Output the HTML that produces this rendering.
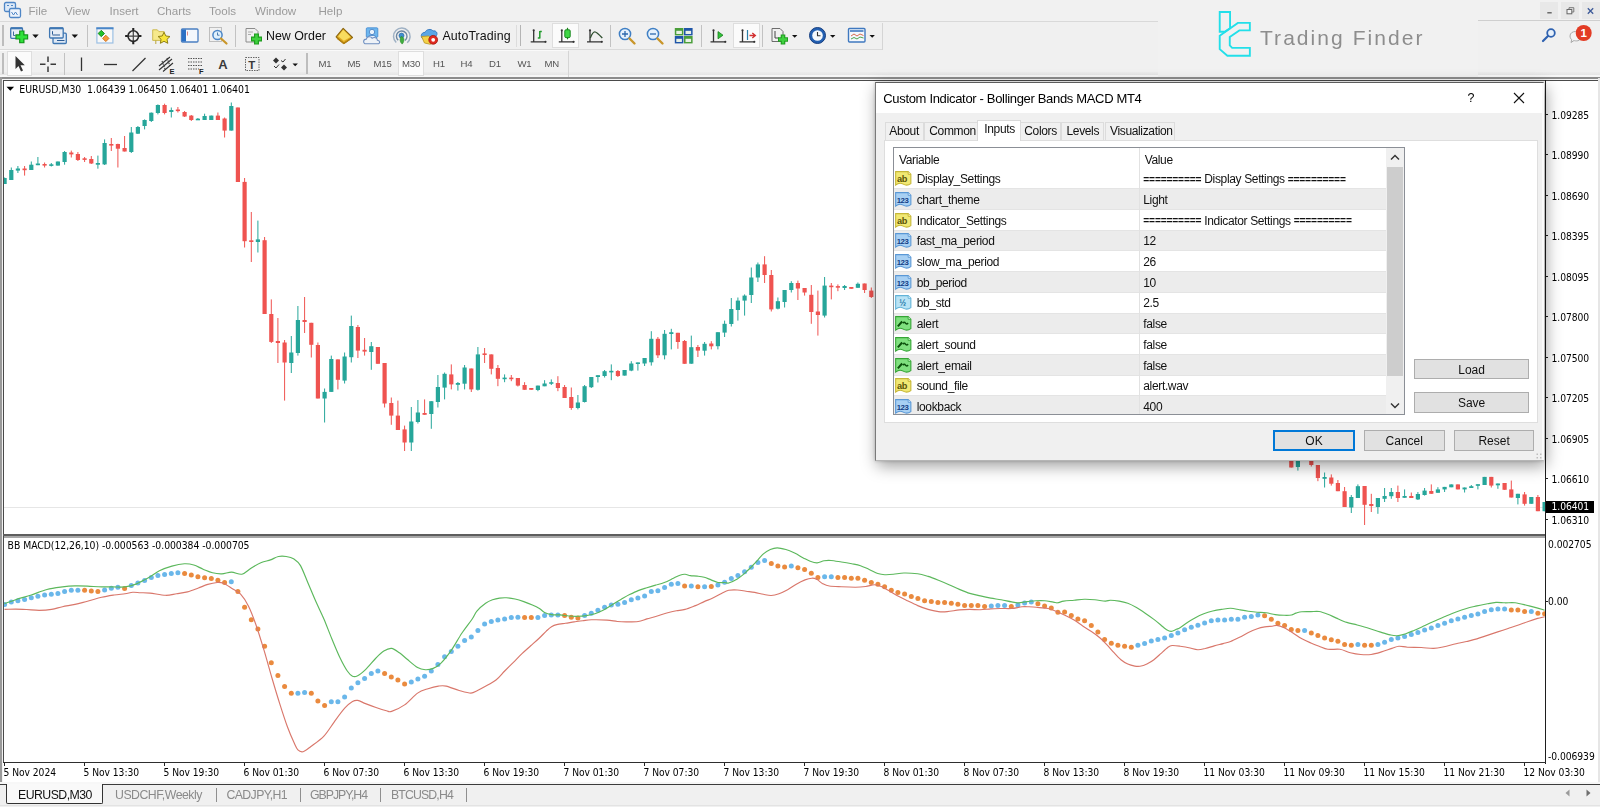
<!DOCTYPE html>
<html lang="en">
<head>
<meta charset="utf-8">
<title>EURUSD,M30 - Bollinger Bands MACD MT4</title>
<style>
html,body{margin:0;padding:0;}
body{width:1600px;height:807px;overflow:hidden;position:relative;background:#f0f0f0;font-family:"Liberation Sans",Arial,sans-serif;color:#000;}
.abs{position:absolute;}
.t{position:absolute;white-space:pre;line-height:1;filter:grayscale(1);}
.ui{font-family:"Liberation Sans",Arial,sans-serif;}
.ch{font-family:"DejaVu Sans","Liberation Sans",sans-serif;font-size:9.200px;color:#000;letter-spacing:-0.05px;transform:scaleY(1.1);transform-origin:50% 50%;}
#menubar{left:0;top:0;width:1600px;height:21px;background:#f1f1f1;}
#menubar .t{top:4.6px;font-size:11.6px;color:#9b9b9b;}
.hl{position:absolute;height:1px;}
.vl{position:absolute;width:1px;}
#chart{left:0;top:77px;width:1600px;height:708px;background:#fff;}
.tf{filter:grayscale(1);position:absolute;top:59.300px;font-size:9.6px;color:#555;white-space:pre;line-height:1;letter-spacing:-0.2px;}
.ax{position:absolute;left:1551.5px;}
.tk{position:absolute;left:1545px;width:3.2px;height:1px;background:#222;}
.tl{position:absolute;top:767.600px;}
.tt{position:absolute;top:763px;width:1px;height:3px;background:#222;}
/* dialog */
#dlg{left:875px;top:81.5px;width:669.3px;height:379.8px;background:#f0f0f0;box-sizing:border-box;border:1px solid #b5b5b5;border-left-color:#7a7a7a;border-top-color:#5c5c5c;border-right-color:#d5d5d5;box-shadow:2px 5px 15px rgba(0,0,0,.38),0 0 3px rgba(0,0,0,.2);}
#dlg .t{font-size:12px;letter-spacing:-0.35px;color:#111;}
.tab{position:absolute;top:40px;height:18px;box-sizing:border-box;border:1px solid #dcdcdc;border-bottom:none;background:#f0f0f0;}
.row{position:absolute;left:0;width:492px;height:20px;border-bottom:1px solid #e4e4e4;box-sizing:border-box;}
.row.alt{background:#ececec;}
.btn span{filter:grayscale(1);display:inline-block;}
.btn{position:absolute;box-sizing:border-box;border:1px solid #adadad;background:#e1e1e1;font-size:12px;text-align:center;line-height:19px;color:#111;height:21px;}
.ic{position:absolute;width:18.5px;height:17.4px;}
</style>
</head>
<body>
<div id="menubar" class="abs">
<svg class="abs" style="left:3px;top:1px" width="20" height="19" viewBox="0 0 20 19"><rect x="1.5" y="1.5" width="11" height="9" rx="1.5" fill="#dce9f7" stroke="#4f86c6" stroke-width="1.3"/><rect x="6.5" y="7.5" width="11" height="9" rx="1.5" fill="#eef4fb" stroke="#4f86c6" stroke-width="1.3"/><path d="M8.5 11l2 3 2-3 2 3" fill="none" stroke="#4f86c6" stroke-width="1"/><path d="M4 4.5h2M8 4.5h2" stroke="#4f86c6" stroke-width="1"/></svg>
<span class="t" style="left:28.5px">File</span>
<span class="t" style="left:65px">View</span>
<span class="t" style="left:109.5px">Insert</span>
<span class="t" style="left:157px">Charts</span>
<span class="t" style="left:209px">Tools</span>
<span class="t" style="left:255px">Window</span>
<span class="t" style="left:318.5px">Help</span>
</div>
<div class="hl" style="left:0;top:21px;width:1158px;background:#d9d9d9"></div>
<div class="hl" style="left:1478px;top:20px;width:122px;background:#cfcfcf"></div>

<div id="tb" class="abs" style="left:0;top:22px;width:1600px;height:55px;background:#f0f0f0"></div>
<div class="abs" style="left:0;top:72px;width:1600px;height:3px;background:linear-gradient(#ededed,#e5e5e5)"></div>
<div class="abs" style="left:0;top:75px;width:1600px;height:2px;background:#f6f6f6"></div>
<div class="hl" style="left:0;top:49px;width:883px;background:#dadada"></div>
<div class="hl" style="left:0;top:50px;width:568px;background:#fafafa"></div>
<div class="vl" style="left:882px;top:23px;height:27px;background:#d5d5d5"></div>
<div class="vl" style="left:568px;top:51px;height:26px;background:#d5d5d5"></div>
<!-- grippers -->
<div class="vl" style="left:2px;top:25px;height:21px;width:1.500px;background:#bdbdbd"></div>
<div class="vl" style="left:2px;top:53px;height:21px;width:1.500px;background:#bdbdbd"></div>
<div class="vl" style="left:519.600px;top:25px;height:21px;width:1.700px;background:#b4b4b4"></div>
<div class="vl" style="left:306px;top:53px;height:21px;width:1.500px;background:#bdbdbd"></div>
<!-- separators tb1 -->
<div class="vl" style="left:87px;top:25px;height:22px;width:1.300px;background:#c2c2c2"></div>
<div class="vl" style="left:235px;top:25px;height:22px;width:1.300px;background:#c2c2c2"></div>
<div class="vl" style="left:515.800px;top:25px;height:22px;width:1.200px;background:#dcdcdc"></div>
<div class="vl" style="left:610px;top:25px;height:22px;width:1.300px;background:#c2c2c2"></div>
<div class="vl" style="left:701px;top:25px;height:22px;width:1.300px;background:#c2c2c2"></div>
<div class="vl" style="left:762px;top:25px;height:22px;width:1.300px;background:#c2c2c2"></div>
<div class="vl" style="left:64px;top:53px;height:22px;width:1.300px;background:#c2c2c2"></div>
<!-- pressed boxes -->
<div class="abs" style="left:552px;top:23px;width:27px;height:25px;background:#fbfbfb;border:1px solid #dedede;box-sizing:border-box"></div>
<div class="abs" style="left:733px;top:23px;width:27px;height:25px;background:#fbfbfb;border:1px solid #dedede;box-sizing:border-box"></div>
<div class="abs" style="left:7px;top:51px;width:25px;height:25px;background:#fbfbfb;border:1px solid #dedede;box-sizing:border-box"></div>
<div class="abs" style="left:398px;top:51px;width:26px;height:25px;background:#fbfbfb;border:1px solid #dedede;box-sizing:border-box"></div>
<svg class="abs" style="left:0;top:22px" width="900" height="56" viewBox="0 22 900 56">
<!-- 1 new chart -->
<g><rect x="10.700" y="27.800" width="11.800" height="10.500" rx="1" fill="#e8eef6" stroke="#3f77b3" stroke-width="1.300"/><path d="M10.700 28.300h11.800" stroke="#3f77b3" stroke-width="2"/><path d="M13.500 31.500v4M13.500 35.500h2" stroke="#2c5c96" stroke-width=".9" fill="none"/><path d="M21.800 30.500v12.800M15.400 36.900h12.800" stroke="#13921a" stroke-width="5.400"/><path d="M21.800 31.600v10.600M16.500 36.900h10.600" stroke="#2fe23a" stroke-width="3"/><path d="M32.300 34.400h6.400l-3.200 3.500z" fill="#111"/></g>
<!-- 2 profiles -->
<g><rect x="53" y="33.200" width="13.300" height="10.300" rx="1" fill="#dfe9f5" stroke="#3f77b3" stroke-width="1.300"/><path d="M57 40.500h7.500" stroke="#2c5c96" stroke-width="1"/><rect x="49.600" y="27.800" width="13.600" height="10.200" rx="1" fill="#e8eef6" stroke="#3f77b3" stroke-width="1.300"/><path d="M49.600 28.300h13.600" stroke="#3f77b3" stroke-width="2"/><path d="M52.500 31.200v3.300M52.500 35h7.500" stroke="#2c5c96" stroke-width="1" fill="none"/><path d="M71.600 34.400h6.400l-3.200 3.500z" fill="#111"/></g>
<!-- 3 market watch -->
<g><rect x="96.900" y="28" width="16" height="15" fill="#f8f8f8" stroke="#9cc0e4" stroke-width="1.200"/><path d="M96.300 28.300h17.200" stroke="#4a86c8" stroke-width="2"/><path d="M101.300 30.300l3.200 3.200-3.200 3.200-3.200-3.200z" fill="#22c22a" stroke="#0f7a16" stroke-width=".8"/><path d="M105.800 35.200l3.200 3.200-3.200 3.200-3.200-3.200z" fill="#f59a3a" stroke="#c9640e" stroke-width=".8"/></g>
<!-- 4 crosshair -->
<g fill="none"><path d="M133.300 28.300v15.600M125.500 36.100h15.600" stroke="#444" stroke-width="1.200"/><circle cx="133.300" cy="36.100" r="5.300" stroke="#2a2a2a" stroke-width="1.600"/><path d="M133.300 28v2.500M133.300 41.700v2.500M125.200 36.100h2.500M138.900 36.100h2.500" stroke="#222" stroke-width="2"/></g>
<!-- 5 folder star -->
<g><path d="M152.700 29.800h4.600l1.600 1.800h5.300v8.800h-11.500z" fill="#f6e98b" stroke="#c9b646" stroke-width=".9"/><path d="M155.800 40.400v3.600" stroke="#b9a63c" stroke-width="1"/><path d="M164 32.300l1.900 3.700 4.100.5-3 2.800.8 4-3.800-2-3.700 2 .8-4-3-2.800 4.100-.5z" fill="#f8e53a" stroke="#8f7f14" stroke-width="1"/></g>
<!-- 6 navigator -->
<g><rect x="181.5" y="29" width="16.5" height="13" rx="1" fill="#f3f7fc" stroke="#4a7fc1" stroke-width="1.3"/><rect x="182" y="29.5" width="4" height="12" fill="#2a6fc4"/><path d="M187.5 31.5v4" stroke="#d46a6a" stroke-width=".8"/></g>
<!-- 7 magnifier clock -->
<g><rect x="209.5" y="27.5" width="12" height="14" fill="#f1f1f1" stroke="#b9b9b9" stroke-width=".9"/><circle cx="217.5" cy="35" r="4.6" fill="#dff0fc" stroke="#4a86c8" stroke-width="1.5"/><path d="M217.5 32.5v2.7h2" stroke="#3a6ea5" stroke-width=".9" fill="none"/><path d="M221 38.5l5.5 5" stroke="#c9962a" stroke-width="2.2" stroke-linecap="round"/></g>
<!-- 8 new order -->
<g><path d="M246 28.5h9l3 3v10.5h-12z" fill="#f0f0f0" stroke="#8c8c8c" stroke-width="1"/><path d="M248 32h5M248 34.5h3" stroke="#9a9a9a" stroke-width=".8"/><path d="M256.5 33.5v11M251 39h11" stroke="#1f9c1f" stroke-width="5"/><path d="M256.5 34.5v9M252 39h9" stroke="#3fd13f" stroke-width="2.6"/></g>
<!-- 9 gold book -->
<g><path d="M343.200 28.300l9.300 9.200-8.700 6-7.700-6.600z" fill="#e2ac22" stroke="#8a6510" stroke-width="1.100" stroke-linejoin="round"/><path d="M343.200 29.800l7.300 7.200-6.700 3.800-5.600-4.600z" fill="#f8dc5e"/><path d="M337 38.300l6.800 5.200 8-5.500" fill="none" stroke="#b5820f" stroke-width="1.300"/></g>
<!-- 10 person cloud -->
<g><rect x="366.300" y="27.800" width="11.500" height="9.500" rx="1" fill="#6db6ee" stroke="#3d86d0" stroke-width=".8"/><circle cx="372" cy="32" r="2.700" fill="#eaf3fc" stroke="#4d83c4" stroke-width=".9"/><path d="M367.500 38c0-3.500 9-3.500 9 0" fill="#eaf3fc" stroke="#4d83c4" stroke-width=".9"/><path d="M366 43.800c-3.200 0-3.200-4.600.3-4.700.6-2.600 4.400-3.200 5.800-.9 2.200-1.600 5.400-.3 5.300 2 3 .2 2.900 3.700.2 3.600z" fill="#eef2f7" stroke="#6f8fc0" stroke-width="1.100"/></g>
<!-- 11 signal -->
<g fill="none"><path d="M396.200 42.500a8.300 8.300 0 1 1 11 .2" stroke="#9fb1c4" stroke-width="1.500"/><path d="M398.200 40.300a5.300 5.300 0 1 1 6.800 .2" stroke="#6d87a2" stroke-width="1.400"/><circle cx="401.500" cy="35.600" r="2.500" fill="#3f8fd0" stroke="#2b6ca8" stroke-width=".7"/><path d="M401 36.500c3.500.5 3.800 4.500 1.200 7.600-2.200-1.800-2.800-4.300-1.200-7.600z" fill="#3fae3f" stroke="#2a8a2a" stroke-width=".6"/></g>
<!-- 12 autotrading -->
<g><path d="M422 38c-2-3 .5-6 3-5.500 1-3.500 6.500-4 8-1.500 3-.8 5 2 3.500 4.500l-3 4.500h-9z" fill="#5aa6e6" stroke="#2f74bd" stroke-width=".9"/><path d="M421.500 36.500l3 6.500 6 1.300 3-4.500-5-3.800z" fill="#f3d248" stroke="#b8901c" stroke-width=".8"/><circle cx="433.200" cy="39.800" r="4.400" fill="#e02a20" stroke="#a3150d" stroke-width=".8"/><circle cx="433.200" cy="39.800" r="1.900" fill="#fff"/></g>
<!-- 13 bar chart -->
<g><path d="M533.7 30.500v11.800M530.7 41.800h14.500" stroke="#333" stroke-width="1.300" fill="none"/><circle cx="533.7" cy="30.300" r="1.100" fill="#333"/><circle cx="545.5" cy="41.800" r="1.100" fill="#333"/><path d="M539.800 31v7.500M537.800 38h2M539.800 31.500h2" stroke="#1f9a2a" stroke-width="1.500" fill="none"/></g>
<!-- 14 candle -->
<g><path d="M561.8 30.500v11.800M558.8 41.800h14.500" stroke="#333" stroke-width="1.300" fill="none"/><circle cx="561.8" cy="30.300" r="1.100" fill="#333"/><circle cx="573.5999999999999" cy="41.800" r="1.100" fill="#333"/><path d="M567.500 27.800v11.500" stroke="#1c7d1c" stroke-width="1.200"/><rect x="564.800" y="29.800" width="5.400" height="7.800" rx="1.200" fill="#3fd745" stroke="#1c8a22" stroke-width="1"/></g>
<!-- 15 line chart -->
<g><path d="M590 30.500v11.800M587 41.800h14.500" stroke="#333" stroke-width="1.300" fill="none"/><circle cx="590" cy="30.300" r="1.100" fill="#333"/><circle cx="601.8" cy="41.800" r="1.100" fill="#333"/><path d="M590.300 38c1.500-4 3-6.200 4.500-6.200s4.500 3 7.500 6.200" stroke="#2f4f2f" stroke-width="1.300" fill="none"/></g>
<!-- 16 zoom in -->
<g><circle cx="625" cy="34" r="5.600" fill="#e6f2fc" stroke="#3f7fc4" stroke-width="1.500"/><path d="M622 34h6M625 31v6" stroke="#2c68ad" stroke-width="1.300"/><path d="M629.500 38.500l5 5" stroke="#c9962a" stroke-width="2.400" stroke-linecap="round"/></g>
<!-- 17 zoom out -->
<g><circle cx="653" cy="34" r="5.600" fill="#e6f2fc" stroke="#3f7fc4" stroke-width="1.500"/><path d="M650 34h6" stroke="#2c68ad" stroke-width="1.300"/><path d="M657.500 38.500l5 5" stroke="#c9962a" stroke-width="2.400" stroke-linecap="round"/></g>
<!-- 18 grid -->
<g><rect x="674.800" y="28" width="8.600" height="7.400" fill="#4a9e3a"/><rect x="684" y="28" width="8.600" height="7.400" fill="#1f55a8"/><rect x="674.800" y="36" width="8.600" height="7.400" fill="#1f55a8"/><rect x="684" y="36" width="8.600" height="7.400" fill="#4a9e3a"/><g fill="#e9f1e4"><rect x="676.300" y="30.800" width="5.600" height="3.200"/><rect x="685.500" y="30.800" width="5.600" height="3.200"/><rect x="676.300" y="38.800" width="5.600" height="3.200"/><rect x="685.500" y="38.800" width="5.600" height="3.200"/></g></g>
<!-- 19 chart shift -->
<g><path d="M713.5 30.500v11.800M710.5 41.800h14.500" stroke="#333" stroke-width="1.300" fill="none"/><circle cx="713.5" cy="30.300" r="1.100" fill="#333"/><circle cx="725.3" cy="41.800" r="1.100" fill="#333"/><path d="M718 31.600l5 3.600-5 3.600z" fill="#2fc23a" stroke="#1c7d1c" stroke-width=".8"/></g>
<!-- 20 autoscroll -->
<g><path d="M742.5 30.500v11.800M739.5 41.800h14.500" stroke="#333" stroke-width="1.300" fill="none"/><circle cx="742.5" cy="30.300" r="1.100" fill="#333"/><circle cx="754.3" cy="41.800" r="1.100" fill="#333"/><path d="M747.500 30v10" stroke="#2a7fa8" stroke-width="1.200"/><path d="M749.500 35.500h5.500M752.300 33l3 2.500-3 2.500" stroke="#d22f2f" stroke-width="1.400" fill="none"/></g>
<!-- 21 indicators -->
<g><path d="M772 28.500h8l3 3v10h-11z" fill="#f0f0f0" stroke="#6d6d6d" stroke-width="1"/><path d="M775 31v7h4" stroke="#444" stroke-width="1" fill="none"/><path d="M783 34.500v10M778 39.500h10" stroke="#1f9c1f" stroke-width="4.600"/><path d="M783 35.500v8M779 39.500h8" stroke="#3fd13f" stroke-width="2.400"/><path d="M792 35h5.400l-2.700 2.800z" fill="#111"/></g>
<!-- 22 clock -->
<g><circle cx="817.500" cy="35.500" r="8" fill="#2360b2" stroke="#173f80" stroke-width="1"/><circle cx="817.500" cy="35.500" r="5.300" fill="#f4f8fc"/><path d="M817.500 32v3.800h3" stroke="#333" stroke-width="1.100" fill="none"/><path d="M830 35h5.400l-2.700 2.800z" fill="#111"/></g>
<!-- 23 template -->
<g><rect x="848.500" y="28.500" width="16.500" height="13.500" rx="1" fill="#f4f8fd" stroke="#3f78bf" stroke-width="1.400"/><path d="M850 31h13.500" stroke="#3f78bf" stroke-width="1.600"/><path d="M851 36l3-2 3 2 3-2 3.500 1.500" stroke="#d45a3a" stroke-width=".9" fill="none"/><path d="M851 39l3-1.500 3 1.500 3-2 3.500 1" stroke="#3a9a3a" stroke-width=".9" fill="none"/><path d="M869.500 35h5.400l-2.700 2.800z" fill="#111"/></g>
<!-- toolbar 2 -->
<path d="M15.500 56v13l3-3 2.500 5.500 2-1-2.500-5.300h4.300z" fill="#333"/>
<path d="M48 56.500v5.500M48 66.500v5.500M40 64.250h5.500M50.500 64.250h5.500" stroke="#3a3a3a" stroke-width="1.500" fill="none"/>
<path d="M81.500 57.500v13.500" stroke="#333" stroke-width="1.300"/>
<path d="M104 64.500h13" stroke="#333" stroke-width="1.300"/>
<path d="M132.500 71l13-13" stroke="#333" stroke-width="1.300"/>
<g stroke="#333" stroke-width="1.100" fill="none"><path d="M159 66l11-9M159 70l13-11M163 71.500l10-8.500" /><path d="M162 61l3 8M167 58l3 8" stroke-dasharray="1.500 1"/></g>
<text x="169.500" y="73.800" font-size="7.500" font-weight="bold" font-family="Liberation Sans,sans-serif" fill="#222">E</text>
<g stroke="#555" stroke-width="1" stroke-dasharray="1.500 1"><path d="M188 58.500h15M188 62h15M188 65.500h15M188 69h11"/></g>
<text x="199" y="74" font-size="7.500" font-weight="bold" font-family="Liberation Sans,sans-serif" fill="#222">F</text>
<text x="218.300" y="69" font-size="13" font-weight="bold" font-family="Liberation Sans,sans-serif" fill="#3a3a3a">A</text>
<g><rect x="245.500" y="57.500" width="13.500" height="13" fill="none" stroke="#666" stroke-width="1" stroke-dasharray="1.500 1"/><text x="248.300" y="68.800" font-size="11.500" font-weight="bold" font-family="Liberation Sans,sans-serif" fill="#3a3a3a">T</text></g>
<g fill="#333"><path d="M276 57.500l3 3-3 3-3-3z"/><path d="M284 64.500l3 3-3 3-3-3z"/><path d="M274 66l2 2 3-3.500" stroke="#333" stroke-width="1" fill="none"/><path d="M281 60.500l2 1.500 2.500-3" stroke="#333" stroke-width="1" fill="none"/><path d="M292.500 63.500h5.400l-2.700 2.800z" fill="#111"/></g>
</svg>
<span class="t ui" style="left:266px;top:29.900px;font-size:12.400px;color:#111">New Order</span>
<span class="t ui" style="left:442.500px;top:29.900px;font-size:12.400px;color:#111;letter-spacing:.1px">AutoTrading</span>
<span class="tf" style="left:318.500px">M1</span>
<span class="tf" style="left:347.500px">M5</span>
<span class="tf" style="left:373.500px">M15</span>
<span class="tf" style="left:402px">M30</span>
<span class="tf" style="left:433px">H1</span>
<span class="tf" style="left:460.500px">H4</span>
<span class="tf" style="left:489px">D1</span>
<span class="tf" style="left:517.500px">W1</span>
<span class="tf" style="left:544.500px">MN</span>
<!-- logo area -->
<div class="abs" style="left:1158px;top:0;width:320px;height:77px;background:#f1f1f1"></div>
<svg class="abs" style="left:1200px;top:0" width="240" height="70" viewBox="0 0 1600 467"><g fill="none" stroke="#22dfe9" stroke-width="12.500" stroke-linejoin="miter"><path d="M131 80H200V188L164 212H131Z"/><path d="M131 238L252 153H332V203H262L198 247V303L214 319H332V372H182L131 328Z"/></g></svg>
<span class="t ui" style="left:1260px;top:26.800px;font-size:21px;color:#8d8d8d;letter-spacing:2.050px">Trading Finder</span>
<!-- window controls -->
<div class="abs" style="left:1540px;top:2px;width:18px;height:17px;background:#e8e8e8"></div>
<div class="abs" style="left:1561px;top:2px;width:18px;height:17px;background:#e8e8e8"></div>
<div class="abs" style="left:1582px;top:2px;width:18px;height:17px;background:#e8e8e8"></div>
<svg class="abs" style="left:1540px;top:2px" width="60" height="17" viewBox="0 0 60 17"><path d="M7.300 10.800h4.400" stroke="#555" stroke-width="1.300"/><rect x="27" y="7.500" width="4.800" height="4.300" fill="#f4f4f4" stroke="#666" stroke-width="1"/><path d="M29 7.500v-1.800h4.800v4.300h-2" fill="none" stroke="#777" stroke-width="1"/><path d="M47.800 6.300l5.400 5.400M53.200 6.300l-5.400 5.400" stroke="#3d5a99" stroke-width="1.300"/></svg>
<!-- search + chat -->
<svg class="abs" style="left:1535px;top:22px" width="65" height="28" viewBox="0 0 65 28"><circle cx="16" cy="11" r="3.800" fill="#e8f1fb" stroke="#2f62b0" stroke-width="1.800"/><path d="M13 14l-5 5" stroke="#2f62b0" stroke-width="2.200" stroke-linecap="round"/><path d="M35 14c0-6 11-6 11 0s-6 5-7 4.500l-3 2 .8-2.800c-1-.7-1.800-2-1.800-3.700z" fill="#f4f4f4" stroke="#a9a9a9" stroke-width="1"/><circle cx="48.700" cy="11" r="8" fill="#e23b24"/><text x="48.700" y="15.200" text-anchor="middle" font-size="11.500" font-weight="bold" font-family="Liberation Sans,sans-serif" fill="#fff">1</text></svg>

<div class="abs" style="left:0;top:77px;width:1600px;height:705px;background:#fff"></div>
<div class="abs" style="left:4px;top:506.700px;width:1541px;height:1px;background:#e6e6e6"></div>
<svg class="abs" style="left:0;top:0" width="1546" height="807" viewBox="0 0 1546 807">
<g shape-rendering="auto">
<path d="M4.6 177.5V184.0" stroke="#26a69a" stroke-width="1"/>
<rect x="2.5" y="178.0" width="4.2" height="6.0" fill="#26a69a"/>
<path d="M11.3 167.5V180.0" stroke="#26a69a" stroke-width="1"/>
<rect x="9.2" y="170.0" width="4.2" height="10.0" fill="#26a69a"/>
<path d="M17.9 166.0V173.0" stroke="#26a69a" stroke-width="1"/>
<rect x="15.8" y="168.5" width="4.2" height="2.1" fill="#26a69a"/>
<path d="M24.6 166.0V175.6" stroke="#ef5350" stroke-width="1"/>
<rect x="22.5" y="168.5" width="4.2" height="1.7" fill="#ef5350"/>
<path d="M31.3 161.5V170.0" stroke="#26a69a" stroke-width="1"/>
<rect x="29.2" y="164.7" width="4.2" height="5.3" fill="#26a69a"/>
<path d="M37.9 157.0V165.2" stroke="#26a69a" stroke-width="1"/>
<rect x="35.8" y="163.5" width="4.2" height="1.7" fill="#26a69a"/>
<path d="M44.6 162.5V167.5" stroke="#ef5350" stroke-width="1"/>
<rect x="42.5" y="164.0" width="4.2" height="1.6" fill="#ef5350"/>
<path d="M51.3 163.0V166.5" stroke="#26a69a" stroke-width="1"/>
<rect x="49.2" y="164.3" width="4.2" height="1.6" fill="#26a69a"/>
<path d="M57.9 161.5V165.6" stroke="#26a69a" stroke-width="1"/>
<rect x="55.8" y="161.5" width="4.2" height="4.1" fill="#26a69a"/>
<path d="M64.6 151.0V164.7" stroke="#26a69a" stroke-width="1"/>
<rect x="62.5" y="152.0" width="4.2" height="10.0" fill="#26a69a"/>
<path d="M71.3 150.6V157.5" stroke="#ef5350" stroke-width="1"/>
<rect x="69.2" y="152.5" width="4.2" height="1.9" fill="#ef5350"/>
<path d="M77.9 152.0V161.0" stroke="#ef5350" stroke-width="1"/>
<rect x="75.8" y="154.0" width="4.2" height="6.0" fill="#ef5350"/>
<path d="M84.6 157.0V162.0" stroke="#ef5350" stroke-width="1"/>
<rect x="82.5" y="158.3" width="4.2" height="1.6" fill="#ef5350"/>
<path d="M91.3 156.0V164.0" stroke="#ef5350" stroke-width="1"/>
<rect x="89.2" y="159.0" width="4.2" height="4.5" fill="#ef5350"/>
<path d="M97.9 155.6V168.7" stroke="#26a69a" stroke-width="1"/>
<rect x="95.8" y="163.0" width="4.2" height="1.7" fill="#26a69a"/>
<path d="M104.6 139.4V165.0" stroke="#26a69a" stroke-width="1"/>
<rect x="102.5" y="143.0" width="4.2" height="21.4" fill="#26a69a"/>
<path d="M111.3 138.0V151.0" stroke="#ef5350" stroke-width="1"/>
<rect x="109.2" y="144.0" width="4.2" height="1.6" fill="#ef5350"/>
<path d="M117.9 143.7V167.5" stroke="#ef5350" stroke-width="1"/>
<rect x="115.8" y="144.0" width="4.2" height="4.7" fill="#ef5350"/>
<path d="M124.6 136.0V151.5" stroke="#ef5350" stroke-width="1"/>
<rect x="122.5" y="148.0" width="4.2" height="3.5" fill="#ef5350"/>
<path d="M131.3 127.0V153.0" stroke="#26a69a" stroke-width="1"/>
<rect x="129.2" y="132.5" width="4.2" height="19.5" fill="#26a69a"/>
<path d="M137.9 126.0V134.0" stroke="#26a69a" stroke-width="1"/>
<rect x="135.8" y="127.0" width="4.2" height="6.7" fill="#26a69a"/>
<path d="M144.6 119.4V129.4" stroke="#26a69a" stroke-width="1"/>
<rect x="142.5" y="120.0" width="4.2" height="6.0" fill="#26a69a"/>
<path d="M151.3 112.5V122.0" stroke="#26a69a" stroke-width="1"/>
<rect x="149.2" y="112.7" width="4.2" height="8.3" fill="#26a69a"/>
<path d="M157.9 104.4V114.4" stroke="#26a69a" stroke-width="1"/>
<rect x="155.8" y="105.0" width="4.2" height="8.0" fill="#26a69a"/>
<path d="M164.6 103.7V114.4" stroke="#ef5350" stroke-width="1"/>
<rect x="162.5" y="105.0" width="4.2" height="8.0" fill="#ef5350"/>
<path d="M171.3 107.5V117.5" stroke="#26a69a" stroke-width="1"/>
<rect x="169.2" y="110.0" width="4.2" height="2.0" fill="#26a69a"/>
<path d="M177.9 107.0V112.5" stroke="#ef5350" stroke-width="1"/>
<rect x="175.8" y="109.5" width="4.2" height="1.6" fill="#ef5350"/>
<path d="M184.6 111.0V117.0" stroke="#ef5350" stroke-width="1"/>
<rect x="182.5" y="112.0" width="4.2" height="4.5" fill="#ef5350"/>
<path d="M191.3 115.0V121.0" stroke="#ef5350" stroke-width="1"/>
<rect x="189.2" y="115.6" width="4.2" height="4.4" fill="#ef5350"/>
<path d="M197.9 118.0V120.0" stroke="#26a69a" stroke-width="1"/>
<rect x="195.8" y="118.7" width="4.2" height="1.6" fill="#26a69a"/>
<path d="M204.6 113.7V120.0" stroke="#26a69a" stroke-width="1"/>
<rect x="202.5" y="116.0" width="4.2" height="4.0" fill="#26a69a"/>
<path d="M211.3 115.6V120.0" stroke="#26a69a" stroke-width="1"/>
<rect x="209.2" y="115.6" width="4.2" height="4.4" fill="#26a69a"/>
<path d="M217.9 112.5V120.0" stroke="#ef5350" stroke-width="1"/>
<rect x="215.8" y="115.6" width="4.2" height="4.4" fill="#ef5350"/>
<path d="M224.6 117.5V137.5" stroke="#ef5350" stroke-width="1"/>
<rect x="222.5" y="118.5" width="4.2" height="12.1" fill="#ef5350"/>
<path d="M231.3 102.5V130.6" stroke="#26a69a" stroke-width="1"/>
<rect x="229.2" y="106.0" width="4.2" height="24.6" fill="#26a69a"/>
<path d="M237.9 107.5V182.0" stroke="#ef5350" stroke-width="1"/>
<rect x="235.8" y="107.5" width="4.2" height="74.5" fill="#ef5350"/>
<path d="M244.6 178.0V247.5" stroke="#ef5350" stroke-width="1"/>
<rect x="242.5" y="181.9" width="4.2" height="59.3" fill="#ef5350"/>
<path d="M251.3 212.0V262.0" stroke="#ef5350" stroke-width="1"/>
<rect x="249.2" y="240.3" width="4.2" height="1.7" fill="#ef5350"/>
<path d="M257.9 220.6V252.5" stroke="#26a69a" stroke-width="1"/>
<rect x="255.8" y="239.4" width="4.2" height="2.6" fill="#26a69a"/>
<path d="M264.6 237.0V314.0" stroke="#ef5350" stroke-width="1"/>
<rect x="262.5" y="240.2" width="4.2" height="73.8" fill="#ef5350"/>
<path d="M271.3 299.4V343.0" stroke="#ef5350" stroke-width="1"/>
<rect x="269.2" y="314.0" width="4.2" height="27.9" fill="#ef5350"/>
<path d="M277.9 318.0V363.0" stroke="#ef5350" stroke-width="1"/>
<rect x="275.8" y="341.0" width="4.2" height="2.0" fill="#ef5350"/>
<path d="M284.6 340.0V400.6" stroke="#ef5350" stroke-width="1"/>
<rect x="282.5" y="342.5" width="4.2" height="20.0" fill="#ef5350"/>
<path d="M291.3 336.0V373.0" stroke="#26a69a" stroke-width="1"/>
<rect x="289.2" y="352.5" width="4.2" height="10.5" fill="#26a69a"/>
<path d="M297.9 306.0V355.6" stroke="#26a69a" stroke-width="1"/>
<rect x="295.8" y="320.0" width="4.2" height="33.0" fill="#26a69a"/>
<path d="M304.6 297.0V333.0" stroke="#ef5350" stroke-width="1"/>
<rect x="302.5" y="320.0" width="4.2" height="2.0" fill="#ef5350"/>
<path d="M311.3 322.8V357.5" stroke="#ef5350" stroke-width="1"/>
<rect x="309.2" y="322.8" width="4.2" height="22.0" fill="#ef5350"/>
<path d="M317.9 342.5V398.5" stroke="#ef5350" stroke-width="1"/>
<rect x="315.8" y="345.0" width="4.2" height="53.5" fill="#ef5350"/>
<path d="M324.6 388.5V422.5" stroke="#26a69a" stroke-width="1"/>
<rect x="322.5" y="391.9" width="4.2" height="6.6" fill="#26a69a"/>
<path d="M331.3 355.6V391.9" stroke="#26a69a" stroke-width="1"/>
<rect x="329.2" y="359.0" width="4.2" height="32.9" fill="#26a69a"/>
<path d="M337.9 359.4V389.4" stroke="#ef5350" stroke-width="1"/>
<rect x="335.8" y="359.4" width="4.2" height="20.4" fill="#ef5350"/>
<path d="M344.6 352.5V383.5" stroke="#26a69a" stroke-width="1"/>
<rect x="342.5" y="356.5" width="4.2" height="24.1" fill="#26a69a"/>
<path d="M351.3 315.6V362.5" stroke="#26a69a" stroke-width="1"/>
<rect x="349.2" y="326.0" width="4.2" height="31.2" fill="#26a69a"/>
<path d="M357.9 325.0V358.0" stroke="#ef5350" stroke-width="1"/>
<rect x="355.8" y="327.0" width="4.2" height="23.6" fill="#ef5350"/>
<path d="M364.6 338.0V355.6" stroke="#ef5350" stroke-width="1"/>
<rect x="362.5" y="349.8" width="4.2" height="1.8" fill="#ef5350"/>
<path d="M371.3 342.0V369.8" stroke="#26a69a" stroke-width="1"/>
<rect x="369.2" y="346.2" width="4.2" height="5.8" fill="#26a69a"/>
<path d="M377.9 347.0V363.8" stroke="#ef5350" stroke-width="1"/>
<rect x="375.8" y="347.0" width="4.2" height="16.8" fill="#ef5350"/>
<path d="M384.6 363.0V407.5" stroke="#ef5350" stroke-width="1"/>
<rect x="382.5" y="363.0" width="4.2" height="40.5" fill="#ef5350"/>
<path d="M391.3 397.5V424.8" stroke="#ef5350" stroke-width="1"/>
<rect x="389.2" y="403.0" width="4.2" height="12.6" fill="#ef5350"/>
<path d="M397.9 400.6V430.0" stroke="#ef5350" stroke-width="1"/>
<rect x="395.8" y="415.6" width="4.2" height="14.4" fill="#ef5350"/>
<path d="M404.6 425.6V451.0" stroke="#ef5350" stroke-width="1"/>
<rect x="402.5" y="429.4" width="4.2" height="13.1" fill="#ef5350"/>
<path d="M411.3 407.0V451.0" stroke="#26a69a" stroke-width="1"/>
<rect x="409.2" y="421.5" width="4.2" height="21.0" fill="#26a69a"/>
<path d="M417.9 400.0V423.5" stroke="#26a69a" stroke-width="1"/>
<rect x="415.8" y="412.5" width="4.2" height="9.5" fill="#26a69a"/>
<path d="M424.6 399.4V414.8" stroke="#ef5350" stroke-width="1"/>
<rect x="422.5" y="413.0" width="4.2" height="1.8" fill="#ef5350"/>
<path d="M431.3 401.2V428.8" stroke="#26a69a" stroke-width="1"/>
<rect x="429.2" y="401.2" width="4.2" height="12.8" fill="#26a69a"/>
<path d="M437.9 375.0V407.5" stroke="#26a69a" stroke-width="1"/>
<rect x="435.8" y="387.0" width="4.2" height="15.0" fill="#26a69a"/>
<path d="M444.6 372.5V399.4" stroke="#26a69a" stroke-width="1"/>
<rect x="442.5" y="373.8" width="4.2" height="13.8" fill="#26a69a"/>
<path d="M451.3 364.4V389.4" stroke="#ef5350" stroke-width="1"/>
<rect x="449.2" y="374.4" width="4.2" height="10.0" fill="#ef5350"/>
<path d="M457.9 382.0V390.6" stroke="#26a69a" stroke-width="1"/>
<rect x="455.8" y="383.0" width="4.2" height="1.8" fill="#26a69a"/>
<path d="M464.6 365.0V389.4" stroke="#26a69a" stroke-width="1"/>
<rect x="462.5" y="367.5" width="4.2" height="16.2" fill="#26a69a"/>
<path d="M471.3 368.5V392.0" stroke="#ef5350" stroke-width="1"/>
<rect x="469.2" y="368.5" width="4.2" height="20.9" fill="#ef5350"/>
<path d="M477.9 347.0V390.6" stroke="#26a69a" stroke-width="1"/>
<rect x="475.8" y="354.4" width="4.2" height="35.4" fill="#26a69a"/>
<path d="M484.6 348.0V363.0" stroke="#ef5350" stroke-width="1"/>
<rect x="482.5" y="353.4" width="4.2" height="1.6" fill="#ef5350"/>
<path d="M491.3 354.4V374.4" stroke="#ef5350" stroke-width="1"/>
<rect x="489.2" y="354.4" width="4.2" height="14.4" fill="#ef5350"/>
<path d="M497.9 365.0V386.2" stroke="#ef5350" stroke-width="1"/>
<rect x="495.8" y="368.0" width="4.2" height="10.8" fill="#ef5350"/>
<path d="M504.6 374.4V382.2" stroke="#26a69a" stroke-width="1"/>
<rect x="502.5" y="377.6" width="4.2" height="1.6" fill="#26a69a"/>
<path d="M511.3 375.0V381.2" stroke="#ef5350" stroke-width="1"/>
<rect x="509.2" y="377.6" width="4.2" height="1.6" fill="#ef5350"/>
<path d="M517.9 378.0V386.5" stroke="#ef5350" stroke-width="1"/>
<rect x="515.8" y="378.0" width="4.2" height="7.6" fill="#ef5350"/>
<path d="M524.6 382.2V389.8" stroke="#ef5350" stroke-width="1"/>
<rect x="522.5" y="385.0" width="4.2" height="4.8" fill="#ef5350"/>
<path d="M531.3 388.0V389.8" stroke="#ef5350" stroke-width="1"/>
<rect x="529.2" y="388.0" width="4.2" height="1.8" fill="#ef5350"/>
<path d="M537.9 385.6V391.2" stroke="#26a69a" stroke-width="1"/>
<rect x="535.8" y="385.6" width="4.2" height="4.4" fill="#26a69a"/>
<path d="M544.6 380.2V386.2" stroke="#26a69a" stroke-width="1"/>
<rect x="542.5" y="383.5" width="4.2" height="2.8" fill="#26a69a"/>
<path d="M551.3 379.4V385.0" stroke="#26a69a" stroke-width="1"/>
<rect x="549.2" y="382.2" width="4.2" height="1.6" fill="#26a69a"/>
<path d="M557.9 376.2V391.2" stroke="#ef5350" stroke-width="1"/>
<rect x="555.8" y="383.0" width="4.2" height="5.0" fill="#ef5350"/>
<path d="M564.6 385.0V398.0" stroke="#ef5350" stroke-width="1"/>
<rect x="562.5" y="387.0" width="4.2" height="11.0" fill="#ef5350"/>
<path d="M571.3 387.5V409.8" stroke="#ef5350" stroke-width="1"/>
<rect x="569.2" y="397.0" width="4.2" height="11.0" fill="#ef5350"/>
<path d="M577.9 395.0V409.4" stroke="#26a69a" stroke-width="1"/>
<rect x="575.8" y="402.5" width="4.2" height="5.5" fill="#26a69a"/>
<path d="M584.6 385.0V402.5" stroke="#26a69a" stroke-width="1"/>
<rect x="582.5" y="386.2" width="4.2" height="15.8" fill="#26a69a"/>
<path d="M591.3 377.0V388.0" stroke="#26a69a" stroke-width="1"/>
<rect x="589.2" y="377.0" width="4.2" height="10.2" fill="#26a69a"/>
<path d="M597.9 375.2V382.5" stroke="#26a69a" stroke-width="1"/>
<rect x="595.8" y="375.2" width="4.2" height="1.8" fill="#26a69a"/>
<path d="M604.6 370.0V377.5" stroke="#26a69a" stroke-width="1"/>
<rect x="602.5" y="371.2" width="4.2" height="4.8" fill="#26a69a"/>
<path d="M611.3 364.4V380.2" stroke="#26a69a" stroke-width="1"/>
<rect x="609.2" y="370.8" width="4.2" height="1.6" fill="#26a69a"/>
<path d="M617.9 370.0V377.0" stroke="#ef5350" stroke-width="1"/>
<rect x="615.8" y="371.0" width="4.2" height="5.0" fill="#ef5350"/>
<path d="M624.6 370.0V375.6" stroke="#26a69a" stroke-width="1"/>
<rect x="622.5" y="370.0" width="4.2" height="5.6" fill="#26a69a"/>
<path d="M631.3 361.2V371.2" stroke="#26a69a" stroke-width="1"/>
<rect x="629.2" y="363.5" width="4.2" height="7.1" fill="#26a69a"/>
<path d="M637.9 362.5V370.6" stroke="#26a69a" stroke-width="1"/>
<rect x="635.8" y="362.4" width="4.2" height="1.6" fill="#26a69a"/>
<path d="M644.6 358.0V366.0" stroke="#26a69a" stroke-width="1"/>
<rect x="642.5" y="358.0" width="4.2" height="5.5" fill="#26a69a"/>
<path d="M651.3 331.2V365.6" stroke="#26a69a" stroke-width="1"/>
<rect x="649.2" y="338.8" width="4.2" height="23.5" fill="#26a69a"/>
<path d="M657.9 337.0V358.0" stroke="#ef5350" stroke-width="1"/>
<rect x="655.8" y="338.8" width="4.2" height="16.5" fill="#ef5350"/>
<path d="M664.6 330.0V359.4" stroke="#26a69a" stroke-width="1"/>
<rect x="662.5" y="333.8" width="4.2" height="21.5" fill="#26a69a"/>
<path d="M671.3 328.8V349.4" stroke="#26a69a" stroke-width="1"/>
<rect x="669.2" y="332.2" width="4.2" height="1.8" fill="#26a69a"/>
<path d="M677.9 332.8V348.8" stroke="#ef5350" stroke-width="1"/>
<rect x="675.8" y="332.8" width="4.2" height="9.2" fill="#ef5350"/>
<path d="M684.6 340.0V363.8" stroke="#ef5350" stroke-width="1"/>
<rect x="682.5" y="341.0" width="4.2" height="22.8" fill="#ef5350"/>
<path d="M691.3 335.6V363.8" stroke="#26a69a" stroke-width="1"/>
<rect x="689.2" y="347.2" width="4.2" height="16.5" fill="#26a69a"/>
<path d="M697.9 345.0V357.0" stroke="#ef5350" stroke-width="1"/>
<rect x="695.8" y="347.0" width="4.2" height="3.6" fill="#ef5350"/>
<path d="M704.6 342.0V355.6" stroke="#26a69a" stroke-width="1"/>
<rect x="702.5" y="343.8" width="4.2" height="6.9" fill="#26a69a"/>
<path d="M711.3 341.2V349.4" stroke="#ef5350" stroke-width="1"/>
<rect x="709.2" y="343.5" width="4.2" height="2.8" fill="#ef5350"/>
<path d="M717.9 332.2V349.4" stroke="#26a69a" stroke-width="1"/>
<rect x="715.8" y="332.2" width="4.2" height="14.0" fill="#26a69a"/>
<path d="M724.6 320.6V337.0" stroke="#26a69a" stroke-width="1"/>
<rect x="722.5" y="323.8" width="4.2" height="8.8" fill="#26a69a"/>
<path d="M731.3 298.0V326.5" stroke="#26a69a" stroke-width="1"/>
<rect x="729.2" y="309.0" width="4.2" height="15.0" fill="#26a69a"/>
<path d="M737.9 297.5V320.6" stroke="#26a69a" stroke-width="1"/>
<rect x="735.8" y="300.6" width="4.2" height="9.4" fill="#26a69a"/>
<path d="M744.6 294.4V315.6" stroke="#26a69a" stroke-width="1"/>
<rect x="742.5" y="295.6" width="4.2" height="5.0" fill="#26a69a"/>
<path d="M751.3 267.5V303.0" stroke="#26a69a" stroke-width="1"/>
<rect x="749.2" y="277.5" width="4.2" height="17.5" fill="#26a69a"/>
<path d="M757.9 262.5V282.0" stroke="#26a69a" stroke-width="1"/>
<rect x="755.8" y="264.4" width="4.2" height="13.1" fill="#26a69a"/>
<path d="M764.6 256.2V283.0" stroke="#ef5350" stroke-width="1"/>
<rect x="762.5" y="264.4" width="4.2" height="10.6" fill="#ef5350"/>
<path d="M771.3 270.0V311.5" stroke="#ef5350" stroke-width="1"/>
<rect x="769.2" y="275.0" width="4.2" height="34.4" fill="#ef5350"/>
<path d="M777.9 297.5V309.4" stroke="#26a69a" stroke-width="1"/>
<rect x="775.8" y="301.2" width="4.2" height="7.5" fill="#26a69a"/>
<path d="M784.6 290.0V307.5" stroke="#26a69a" stroke-width="1"/>
<rect x="782.5" y="290.0" width="4.2" height="12.0" fill="#26a69a"/>
<path d="M791.3 281.2V292.5" stroke="#26a69a" stroke-width="1"/>
<rect x="789.2" y="283.0" width="4.2" height="7.0" fill="#26a69a"/>
<path d="M797.9 280.6V300.0" stroke="#ef5350" stroke-width="1"/>
<rect x="795.8" y="283.0" width="4.2" height="5.5" fill="#ef5350"/>
<path d="M804.6 288.0V295.6" stroke="#ef5350" stroke-width="1"/>
<rect x="802.5" y="288.0" width="4.2" height="4.5" fill="#ef5350"/>
<path d="M811.3 285.0V323.8" stroke="#ef5350" stroke-width="1"/>
<rect x="809.2" y="294.8" width="4.2" height="17.2" fill="#ef5350"/>
<path d="M817.9 290.6V335.6" stroke="#ef5350" stroke-width="1"/>
<rect x="815.8" y="311.5" width="4.2" height="3.5" fill="#ef5350"/>
<path d="M824.6 277.0V317.5" stroke="#26a69a" stroke-width="1"/>
<rect x="822.5" y="285.6" width="4.2" height="30.0" fill="#26a69a"/>
<path d="M831.3 283.0V299.4" stroke="#ef5350" stroke-width="1"/>
<rect x="829.2" y="285.6" width="4.2" height="1.6" fill="#ef5350"/>
<path d="M837.9 284.4V291.2" stroke="#ef5350" stroke-width="1"/>
<rect x="835.8" y="286.1" width="4.2" height="1.6" fill="#ef5350"/>
<path d="M844.6 285.0V290.0" stroke="#26a69a" stroke-width="1"/>
<rect x="842.5" y="286.0" width="4.2" height="2.0" fill="#26a69a"/>
<path d="M851.3 287.0V288.8" stroke="#ef5350" stroke-width="1"/>
<rect x="849.2" y="287.0" width="4.2" height="1.8" fill="#ef5350"/>
<path d="M857.9 282.5V287.8" stroke="#26a69a" stroke-width="1"/>
<rect x="855.8" y="283.8" width="4.2" height="4.0" fill="#26a69a"/>
<path d="M864.6 283.5V293.0" stroke="#ef5350" stroke-width="1"/>
<rect x="862.5" y="283.5" width="4.2" height="6.5" fill="#ef5350"/>
<path d="M871.3 287.5V298.0" stroke="#ef5350" stroke-width="1"/>
<rect x="869.2" y="290.6" width="4.2" height="6.4" fill="#ef5350"/>
<path d="M1291.3 455.0V467.5" stroke="#ef5350" stroke-width="1"/>
<rect x="1289.2" y="455.0" width="4.2" height="12.5" fill="#ef5350"/>
<path d="M1297.9 455.0V470.6" stroke="#26a69a" stroke-width="1"/>
<rect x="1295.8" y="455.0" width="4.2" height="12.0" fill="#26a69a"/>
<path d="M1311.3 455.0V466.5" stroke="#ef5350" stroke-width="1"/>
<rect x="1309.2" y="455.0" width="4.2" height="10.0" fill="#ef5350"/>
<path d="M1317.9 465.0V481.2" stroke="#ef5350" stroke-width="1"/>
<rect x="1315.8" y="465.0" width="4.2" height="13.0" fill="#ef5350"/>
<path d="M1324.6 472.5V487.5" stroke="#26a69a" stroke-width="1"/>
<rect x="1322.5" y="477.0" width="4.2" height="1.8" fill="#26a69a"/>
<path d="M1331.3 474.4V485.6" stroke="#ef5350" stroke-width="1"/>
<rect x="1329.2" y="477.5" width="4.2" height="6.2" fill="#ef5350"/>
<path d="M1337.9 480.0V491.2" stroke="#ef5350" stroke-width="1"/>
<rect x="1335.8" y="483.0" width="4.2" height="8.2" fill="#ef5350"/>
<path d="M1344.6 487.0V507.0" stroke="#ef5350" stroke-width="1"/>
<rect x="1342.5" y="491.2" width="4.2" height="15.8" fill="#ef5350"/>
<path d="M1351.3 495.0V513.0" stroke="#26a69a" stroke-width="1"/>
<rect x="1349.2" y="497.0" width="4.2" height="10.5" fill="#26a69a"/>
<path d="M1357.9 484.4V498.0" stroke="#26a69a" stroke-width="1"/>
<rect x="1355.8" y="486.2" width="4.2" height="11.8" fill="#26a69a"/>
<path d="M1364.6 486.0V525.0" stroke="#ef5350" stroke-width="1"/>
<rect x="1362.5" y="486.0" width="4.2" height="18.8" fill="#ef5350"/>
<path d="M1371.3 493.8V512.0" stroke="#ef5350" stroke-width="1"/>
<rect x="1369.2" y="504.0" width="4.2" height="2.0" fill="#ef5350"/>
<path d="M1377.9 498.0V513.8" stroke="#26a69a" stroke-width="1"/>
<rect x="1375.8" y="498.0" width="4.2" height="9.0" fill="#26a69a"/>
<path d="M1384.6 488.0V502.0" stroke="#26a69a" stroke-width="1"/>
<rect x="1382.5" y="496.0" width="4.2" height="2.8" fill="#26a69a"/>
<path d="M1391.3 488.0V498.8" stroke="#26a69a" stroke-width="1"/>
<rect x="1389.2" y="492.0" width="4.2" height="4.2" fill="#26a69a"/>
<path d="M1397.9 485.6V502.0" stroke="#ef5350" stroke-width="1"/>
<rect x="1395.8" y="492.0" width="4.2" height="6.0" fill="#ef5350"/>
<path d="M1404.6 489.4V497.8" stroke="#26a69a" stroke-width="1"/>
<rect x="1402.5" y="496.0" width="4.2" height="1.8" fill="#26a69a"/>
<path d="M1411.3 492.5V498.0" stroke="#ef5350" stroke-width="1"/>
<rect x="1409.2" y="496.0" width="4.2" height="2.0" fill="#ef5350"/>
<path d="M1417.9 492.0V500.0" stroke="#26a69a" stroke-width="1"/>
<rect x="1415.8" y="494.0" width="4.2" height="5.4" fill="#26a69a"/>
<path d="M1424.6 488.0V495.6" stroke="#26a69a" stroke-width="1"/>
<rect x="1422.5" y="490.6" width="4.2" height="4.4" fill="#26a69a"/>
<path d="M1431.3 484.4V493.8" stroke="#ef5350" stroke-width="1"/>
<rect x="1429.2" y="491.0" width="4.2" height="2.8" fill="#ef5350"/>
<path d="M1437.9 487.2V492.8" stroke="#26a69a" stroke-width="1"/>
<rect x="1435.8" y="489.4" width="4.2" height="3.4" fill="#26a69a"/>
<path d="M1444.6 486.9V492.0" stroke="#26a69a" stroke-width="1"/>
<rect x="1442.5" y="486.9" width="4.2" height="2.5" fill="#26a69a"/>
<path d="M1451.3 484.4V487.2" stroke="#26a69a" stroke-width="1"/>
<rect x="1449.2" y="484.4" width="4.2" height="2.9" fill="#26a69a"/>
<path d="M1457.9 484.4V489.4" stroke="#ef5350" stroke-width="1"/>
<rect x="1455.8" y="484.4" width="4.2" height="5.0" fill="#ef5350"/>
<path d="M1464.6 487.5V492.5" stroke="#26a69a" stroke-width="1"/>
<rect x="1462.5" y="487.5" width="4.2" height="1.9" fill="#26a69a"/>
<path d="M1471.3 485.0V488.0" stroke="#26a69a" stroke-width="1"/>
<rect x="1469.2" y="486.2" width="4.2" height="1.8" fill="#26a69a"/>
<path d="M1477.9 484.4V489.4" stroke="#26a69a" stroke-width="1"/>
<rect x="1475.8" y="484.2" width="4.2" height="1.6" fill="#26a69a"/>
<path d="M1484.6 476.9V485.0" stroke="#26a69a" stroke-width="1"/>
<rect x="1482.5" y="476.9" width="4.2" height="8.1" fill="#26a69a"/>
<path d="M1491.3 476.9V487.5" stroke="#ef5350" stroke-width="1"/>
<rect x="1489.2" y="476.9" width="4.2" height="8.7" fill="#ef5350"/>
<path d="M1497.9 483.5V488.8" stroke="#26a69a" stroke-width="1"/>
<rect x="1495.8" y="483.5" width="4.2" height="1.8" fill="#26a69a"/>
<path d="M1504.6 483.0V489.8" stroke="#ef5350" stroke-width="1"/>
<rect x="1502.5" y="483.0" width="4.2" height="6.8" fill="#ef5350"/>
<path d="M1511.3 480.6V497.5" stroke="#ef5350" stroke-width="1"/>
<rect x="1509.2" y="489.4" width="4.2" height="8.1" fill="#ef5350"/>
<path d="M1517.9 493.8V504.4" stroke="#26a69a" stroke-width="1"/>
<rect x="1515.8" y="493.8" width="4.2" height="4.2" fill="#26a69a"/>
<path d="M1524.6 492.0V505.6" stroke="#ef5350" stroke-width="1"/>
<rect x="1522.5" y="494.4" width="4.2" height="9.4" fill="#ef5350"/>
<path d="M1531.3 497.0V503.8" stroke="#26a69a" stroke-width="1"/>
<rect x="1529.2" y="497.0" width="4.2" height="6.8" fill="#26a69a"/>
<path d="M1537.9 495.0V511.2" stroke="#ef5350" stroke-width="1"/>
<rect x="1535.8" y="497.0" width="4.2" height="14.2" fill="#ef5350"/>
<path d="M1544.6 502.0V511.2" stroke="#26a69a" stroke-width="1"/>
<rect x="1542.5" y="502.0" width="4.2" height="9.2" fill="#26a69a"/>
</g>
<circle cx="4.6" cy="604.4" r="2.5" fill="#6ab7ea"/>
<circle cx="11.3" cy="602.0" r="2.5" fill="#6ab7ea"/>
<circle cx="17.9" cy="600.8" r="2.5" fill="#6ab7ea"/>
<circle cx="24.6" cy="599.4" r="2.5" fill="#6ab7ea"/>
<circle cx="31.3" cy="597.8" r="2.5" fill="#6ab7ea"/>
<circle cx="37.9" cy="596.2" r="2.5" fill="#6ab7ea"/>
<circle cx="44.6" cy="595.0" r="2.5" fill="#6ab7ea"/>
<circle cx="51.3" cy="594.2" r="2.5" fill="#6ab7ea"/>
<circle cx="57.9" cy="593.4" r="2.5" fill="#6ab7ea"/>
<circle cx="64.6" cy="591.6" r="2.5" fill="#6ab7ea"/>
<circle cx="71.3" cy="590.3" r="2.5" fill="#6ab7ea"/>
<circle cx="77.9" cy="590.3" r="2.5" fill="#6ab7ea"/>
<circle cx="84.6" cy="590.3" r="2.5" fill="#ea8a3e"/>
<circle cx="91.3" cy="591.0" r="2.5" fill="#ea8a3e"/>
<circle cx="97.9" cy="591.6" r="2.5" fill="#ea8a3e"/>
<circle cx="104.6" cy="590.0" r="2.5" fill="#6ab7ea"/>
<circle cx="111.3" cy="588.3" r="2.5" fill="#6ab7ea"/>
<circle cx="117.9" cy="587.2" r="2.5" fill="#6ab7ea"/>
<circle cx="124.6" cy="588.4" r="2.5" fill="#ea8a3e"/>
<circle cx="131.3" cy="585.6" r="2.5" fill="#6ab7ea"/>
<circle cx="137.9" cy="583.0" r="2.5" fill="#6ab7ea"/>
<circle cx="144.6" cy="580.6" r="2.5" fill="#6ab7ea"/>
<circle cx="151.3" cy="577.5" r="2.5" fill="#6ab7ea"/>
<circle cx="157.9" cy="575.5" r="2.5" fill="#6ab7ea"/>
<circle cx="164.6" cy="574.4" r="2.5" fill="#6ab7ea"/>
<circle cx="171.3" cy="573.4" r="2.5" fill="#6ab7ea"/>
<circle cx="177.9" cy="572.8" r="2.5" fill="#6ab7ea"/>
<circle cx="184.6" cy="573.4" r="2.5" fill="#ea8a3e"/>
<circle cx="191.3" cy="575.0" r="2.5" fill="#ea8a3e"/>
<circle cx="197.9" cy="576.7" r="2.5" fill="#ea8a3e"/>
<circle cx="204.6" cy="577.8" r="2.5" fill="#ea8a3e"/>
<circle cx="211.3" cy="578.6" r="2.5" fill="#ea8a3e"/>
<circle cx="217.9" cy="580.2" r="2.5" fill="#ea8a3e"/>
<circle cx="224.6" cy="582.5" r="2.5" fill="#ea8a3e"/>
<circle cx="231.3" cy="581.7" r="2.5" fill="#6ab7ea"/>
<circle cx="237.9" cy="591.6" r="2.5" fill="#ea8a3e"/>
<circle cx="244.6" cy="607.3" r="2.5" fill="#ea8a3e"/>
<circle cx="251.3" cy="619.8" r="2.5" fill="#ea8a3e"/>
<circle cx="257.9" cy="628.9" r="2.5" fill="#ea8a3e"/>
<circle cx="264.6" cy="646.3" r="2.5" fill="#ea8a3e"/>
<circle cx="271.3" cy="662.7" r="2.5" fill="#ea8a3e"/>
<circle cx="277.9" cy="675.5" r="2.5" fill="#ea8a3e"/>
<circle cx="284.6" cy="686.6" r="2.5" fill="#ea8a3e"/>
<circle cx="291.3" cy="693.2" r="2.5" fill="#ea8a3e"/>
<circle cx="297.9" cy="693.2" r="2.5" fill="#6ab7ea"/>
<circle cx="304.6" cy="692.4" r="2.5" fill="#6ab7ea"/>
<circle cx="311.3" cy="693.2" r="2.5" fill="#ea8a3e"/>
<circle cx="317.9" cy="701.0" r="2.5" fill="#ea8a3e"/>
<circle cx="324.6" cy="705.4" r="2.5" fill="#ea8a3e"/>
<circle cx="331.3" cy="701.7" r="2.5" fill="#6ab7ea"/>
<circle cx="337.9" cy="701.7" r="2.5" fill="#6ab7ea"/>
<circle cx="344.6" cy="697.0" r="2.5" fill="#6ab7ea"/>
<circle cx="351.3" cy="688.0" r="2.5" fill="#6ab7ea"/>
<circle cx="357.9" cy="682.7" r="2.5" fill="#6ab7ea"/>
<circle cx="364.6" cy="678.6" r="2.5" fill="#6ab7ea"/>
<circle cx="371.3" cy="673.6" r="2.5" fill="#6ab7ea"/>
<circle cx="377.9" cy="671.0" r="2.5" fill="#6ab7ea"/>
<circle cx="384.6" cy="673.6" r="2.5" fill="#ea8a3e"/>
<circle cx="391.3" cy="677.0" r="2.5" fill="#ea8a3e"/>
<circle cx="397.9" cy="680.0" r="2.5" fill="#ea8a3e"/>
<circle cx="404.6" cy="684.0" r="2.5" fill="#ea8a3e"/>
<circle cx="411.3" cy="682.0" r="2.5" fill="#6ab7ea"/>
<circle cx="417.9" cy="679.0" r="2.5" fill="#6ab7ea"/>
<circle cx="424.6" cy="676.2" r="2.5" fill="#6ab7ea"/>
<circle cx="431.3" cy="671.0" r="2.5" fill="#6ab7ea"/>
<circle cx="437.9" cy="664.5" r="2.5" fill="#6ab7ea"/>
<circle cx="444.6" cy="656.7" r="2.5" fill="#6ab7ea"/>
<circle cx="451.3" cy="651.5" r="2.5" fill="#6ab7ea"/>
<circle cx="457.9" cy="646.3" r="2.5" fill="#6ab7ea"/>
<circle cx="464.6" cy="640.6" r="2.5" fill="#6ab7ea"/>
<circle cx="471.3" cy="637.1" r="2.5" fill="#6ab7ea"/>
<circle cx="477.9" cy="630.5" r="2.5" fill="#6ab7ea"/>
<circle cx="484.6" cy="624.1" r="2.5" fill="#6ab7ea"/>
<circle cx="491.3" cy="621.5" r="2.5" fill="#6ab7ea"/>
<circle cx="497.9" cy="620.0" r="2.5" fill="#6ab7ea"/>
<circle cx="504.6" cy="618.9" r="2.5" fill="#6ab7ea"/>
<circle cx="511.3" cy="617.5" r="2.5" fill="#6ab7ea"/>
<circle cx="517.9" cy="617.2" r="2.5" fill="#6ab7ea"/>
<circle cx="524.6" cy="617.4" r="2.5" fill="#ea8a3e"/>
<circle cx="531.3" cy="617.4" r="2.5" fill="#ea8a3e"/>
<circle cx="537.9" cy="617.4" r="2.5" fill="#6ab7ea"/>
<circle cx="544.6" cy="615.6" r="2.5" fill="#6ab7ea"/>
<circle cx="551.3" cy="614.9" r="2.5" fill="#6ab7ea"/>
<circle cx="557.9" cy="614.9" r="2.5" fill="#6ab7ea"/>
<circle cx="564.6" cy="615.6" r="2.5" fill="#ea8a3e"/>
<circle cx="571.3" cy="617.2" r="2.5" fill="#ea8a3e"/>
<circle cx="577.9" cy="618.0" r="2.5" fill="#ea8a3e"/>
<circle cx="584.6" cy="615.6" r="2.5" fill="#6ab7ea"/>
<circle cx="591.3" cy="613.2" r="2.5" fill="#6ab7ea"/>
<circle cx="597.9" cy="610.2" r="2.5" fill="#6ab7ea"/>
<circle cx="604.6" cy="607.3" r="2.5" fill="#6ab7ea"/>
<circle cx="611.3" cy="605.0" r="2.5" fill="#6ab7ea"/>
<circle cx="617.9" cy="604.2" r="2.5" fill="#6ab7ea"/>
<circle cx="624.6" cy="602.4" r="2.5" fill="#6ab7ea"/>
<circle cx="631.3" cy="599.8" r="2.5" fill="#6ab7ea"/>
<circle cx="637.9" cy="598.1" r="2.5" fill="#6ab7ea"/>
<circle cx="644.6" cy="595.9" r="2.5" fill="#6ab7ea"/>
<circle cx="651.3" cy="591.5" r="2.5" fill="#6ab7ea"/>
<circle cx="657.9" cy="590.8" r="2.5" fill="#6ab7ea"/>
<circle cx="664.6" cy="587.4" r="2.5" fill="#6ab7ea"/>
<circle cx="671.3" cy="584.2" r="2.5" fill="#6ab7ea"/>
<circle cx="677.9" cy="583.4" r="2.5" fill="#6ab7ea"/>
<circle cx="684.6" cy="586.0" r="2.5" fill="#ea8a3e"/>
<circle cx="691.3" cy="586.0" r="2.5" fill="#6ab7ea"/>
<circle cx="697.9" cy="586.8" r="2.5" fill="#ea8a3e"/>
<circle cx="704.6" cy="586.8" r="2.5" fill="#6ab7ea"/>
<circle cx="711.3" cy="586.5" r="2.5" fill="#ea8a3e"/>
<circle cx="717.9" cy="585.1" r="2.5" fill="#6ab7ea"/>
<circle cx="724.6" cy="582.2" r="2.5" fill="#6ab7ea"/>
<circle cx="731.3" cy="578.5" r="2.5" fill="#6ab7ea"/>
<circle cx="737.9" cy="575.6" r="2.5" fill="#6ab7ea"/>
<circle cx="744.6" cy="571.7" r="2.5" fill="#6ab7ea"/>
<circle cx="751.3" cy="567.2" r="2.5" fill="#6ab7ea"/>
<circle cx="757.9" cy="562.5" r="2.5" fill="#6ab7ea"/>
<circle cx="764.6" cy="560.5" r="2.5" fill="#6ab7ea"/>
<circle cx="771.3" cy="563.4" r="2.5" fill="#ea8a3e"/>
<circle cx="777.9" cy="566.0" r="2.5" fill="#ea8a3e"/>
<circle cx="784.6" cy="566.9" r="2.5" fill="#ea8a3e"/>
<circle cx="791.3" cy="566.0" r="2.5" fill="#6ab7ea"/>
<circle cx="797.9" cy="567.8" r="2.5" fill="#ea8a3e"/>
<circle cx="804.6" cy="569.5" r="2.5" fill="#ea8a3e"/>
<circle cx="811.3" cy="573.3" r="2.5" fill="#ea8a3e"/>
<circle cx="817.9" cy="577.6" r="2.5" fill="#ea8a3e"/>
<circle cx="824.6" cy="576.8" r="2.5" fill="#6ab7ea"/>
<circle cx="831.3" cy="576.8" r="2.5" fill="#6ab7ea"/>
<circle cx="837.9" cy="577.6" r="2.5" fill="#ea8a3e"/>
<circle cx="844.6" cy="577.6" r="2.5" fill="#ea8a3e"/>
<circle cx="851.3" cy="578.2" r="2.5" fill="#ea8a3e"/>
<circle cx="857.9" cy="578.2" r="2.5" fill="#ea8a3e"/>
<circle cx="864.6" cy="580.2" r="2.5" fill="#ea8a3e"/>
<circle cx="871.3" cy="582.5" r="2.5" fill="#ea8a3e"/>
<circle cx="877.9" cy="584.2" r="2.5" fill="#ea8a3e"/>
<circle cx="884.6" cy="586.8" r="2.5" fill="#ea8a3e"/>
<circle cx="891.3" cy="590.3" r="2.5" fill="#ea8a3e"/>
<circle cx="897.9" cy="592.6" r="2.5" fill="#ea8a3e"/>
<circle cx="904.6" cy="594.1" r="2.5" fill="#ea8a3e"/>
<circle cx="911.3" cy="596.4" r="2.5" fill="#ea8a3e"/>
<circle cx="917.9" cy="598.5" r="2.5" fill="#ea8a3e"/>
<circle cx="924.6" cy="600.7" r="2.5" fill="#ea8a3e"/>
<circle cx="931.3" cy="601.6" r="2.5" fill="#ea8a3e"/>
<circle cx="937.9" cy="602.4" r="2.5" fill="#ea8a3e"/>
<circle cx="944.6" cy="602.4" r="2.5" fill="#ea8a3e"/>
<circle cx="951.3" cy="603.3" r="2.5" fill="#ea8a3e"/>
<circle cx="957.9" cy="604.2" r="2.5" fill="#ea8a3e"/>
<circle cx="964.6" cy="605.6" r="2.5" fill="#ea8a3e"/>
<circle cx="971.3" cy="605.6" r="2.5" fill="#ea8a3e"/>
<circle cx="977.9" cy="605.6" r="2.5" fill="#ea8a3e"/>
<circle cx="984.6" cy="606.4" r="2.5" fill="#ea8a3e"/>
<circle cx="991.3" cy="605.9" r="2.5" fill="#6ab7ea"/>
<circle cx="997.9" cy="605.4" r="2.5" fill="#6ab7ea"/>
<circle cx="1004.6" cy="605.4" r="2.5" fill="#6ab7ea"/>
<circle cx="1011.3" cy="606.4" r="2.5" fill="#ea8a3e"/>
<circle cx="1017.9" cy="605.0" r="2.5" fill="#6ab7ea"/>
<circle cx="1024.6" cy="603.0" r="2.5" fill="#6ab7ea"/>
<circle cx="1031.3" cy="602.1" r="2.5" fill="#6ab7ea"/>
<circle cx="1037.9" cy="603.8" r="2.5" fill="#ea8a3e"/>
<circle cx="1044.6" cy="605.9" r="2.5" fill="#ea8a3e"/>
<circle cx="1051.3" cy="608.0" r="2.5" fill="#ea8a3e"/>
<circle cx="1057.9" cy="612.3" r="2.5" fill="#ea8a3e"/>
<circle cx="1064.6" cy="612.0" r="2.5" fill="#ea8a3e"/>
<circle cx="1071.3" cy="615.5" r="2.5" fill="#ea8a3e"/>
<circle cx="1077.9" cy="618.9" r="2.5" fill="#ea8a3e"/>
<circle cx="1084.6" cy="620.7" r="2.5" fill="#ea8a3e"/>
<circle cx="1091.3" cy="625.5" r="2.5" fill="#ea8a3e"/>
<circle cx="1097.9" cy="631.9" r="2.5" fill="#ea8a3e"/>
<circle cx="1104.6" cy="639.4" r="2.5" fill="#ea8a3e"/>
<circle cx="1111.3" cy="643.2" r="2.5" fill="#ea8a3e"/>
<circle cx="1117.9" cy="645.3" r="2.5" fill="#ea8a3e"/>
<circle cx="1124.6" cy="646.3" r="2.5" fill="#ea8a3e"/>
<circle cx="1131.3" cy="647.2" r="2.5" fill="#ea8a3e"/>
<circle cx="1137.9" cy="645.3" r="2.5" fill="#6ab7ea"/>
<circle cx="1144.6" cy="643.6" r="2.5" fill="#6ab7ea"/>
<circle cx="1151.3" cy="641.1" r="2.5" fill="#6ab7ea"/>
<circle cx="1157.9" cy="639.4" r="2.5" fill="#6ab7ea"/>
<circle cx="1164.6" cy="638.0" r="2.5" fill="#6ab7ea"/>
<circle cx="1171.3" cy="635.4" r="2.5" fill="#6ab7ea"/>
<circle cx="1177.9" cy="633.1" r="2.5" fill="#6ab7ea"/>
<circle cx="1184.6" cy="629.7" r="2.5" fill="#6ab7ea"/>
<circle cx="1191.3" cy="627.3" r="2.5" fill="#6ab7ea"/>
<circle cx="1197.9" cy="625.3" r="2.5" fill="#6ab7ea"/>
<circle cx="1204.6" cy="623.0" r="2.5" fill="#6ab7ea"/>
<circle cx="1211.3" cy="620.7" r="2.5" fill="#6ab7ea"/>
<circle cx="1217.9" cy="619.9" r="2.5" fill="#6ab7ea"/>
<circle cx="1224.6" cy="619.9" r="2.5" fill="#6ab7ea"/>
<circle cx="1231.3" cy="619.2" r="2.5" fill="#6ab7ea"/>
<circle cx="1237.9" cy="619.2" r="2.5" fill="#6ab7ea"/>
<circle cx="1244.6" cy="617.2" r="2.5" fill="#6ab7ea"/>
<circle cx="1251.3" cy="616.5" r="2.5" fill="#6ab7ea"/>
<circle cx="1257.9" cy="615.0" r="2.5" fill="#6ab7ea"/>
<circle cx="1264.6" cy="615.8" r="2.5" fill="#ea8a3e"/>
<circle cx="1271.3" cy="619.2" r="2.5" fill="#ea8a3e"/>
<circle cx="1277.9" cy="623.2" r="2.5" fill="#ea8a3e"/>
<circle cx="1284.6" cy="625.4" r="2.5" fill="#ea8a3e"/>
<circle cx="1291.3" cy="629.4" r="2.5" fill="#ea8a3e"/>
<circle cx="1297.9" cy="630.6" r="2.5" fill="#ea8a3e"/>
<circle cx="1304.6" cy="630.6" r="2.5" fill="#6ab7ea"/>
<circle cx="1311.3" cy="633.1" r="2.5" fill="#ea8a3e"/>
<circle cx="1317.9" cy="635.4" r="2.5" fill="#ea8a3e"/>
<circle cx="1324.6" cy="638.0" r="2.5" fill="#ea8a3e"/>
<circle cx="1331.3" cy="639.8" r="2.5" fill="#ea8a3e"/>
<circle cx="1337.9" cy="641.2" r="2.5" fill="#ea8a3e"/>
<circle cx="1344.6" cy="644.6" r="2.5" fill="#ea8a3e"/>
<circle cx="1351.3" cy="645.3" r="2.5" fill="#ea8a3e"/>
<circle cx="1357.9" cy="644.6" r="2.5" fill="#6ab7ea"/>
<circle cx="1364.6" cy="645.3" r="2.5" fill="#ea8a3e"/>
<circle cx="1371.3" cy="645.3" r="2.5" fill="#ea8a3e"/>
<circle cx="1377.9" cy="644.6" r="2.5" fill="#6ab7ea"/>
<circle cx="1384.6" cy="642.3" r="2.5" fill="#6ab7ea"/>
<circle cx="1391.3" cy="639.4" r="2.5" fill="#6ab7ea"/>
<circle cx="1397.9" cy="638.0" r="2.5" fill="#6ab7ea"/>
<circle cx="1404.6" cy="636.6" r="2.5" fill="#6ab7ea"/>
<circle cx="1411.3" cy="634.5" r="2.5" fill="#6ab7ea"/>
<circle cx="1417.9" cy="632.5" r="2.5" fill="#6ab7ea"/>
<circle cx="1424.6" cy="629.9" r="2.5" fill="#6ab7ea"/>
<circle cx="1431.3" cy="628.1" r="2.5" fill="#6ab7ea"/>
<circle cx="1437.9" cy="625.5" r="2.5" fill="#6ab7ea"/>
<circle cx="1444.6" cy="623.3" r="2.5" fill="#6ab7ea"/>
<circle cx="1451.3" cy="620.7" r="2.5" fill="#6ab7ea"/>
<circle cx="1457.9" cy="618.9" r="2.5" fill="#6ab7ea"/>
<circle cx="1464.6" cy="617.2" r="2.5" fill="#6ab7ea"/>
<circle cx="1471.3" cy="615.5" r="2.5" fill="#6ab7ea"/>
<circle cx="1477.9" cy="614.1" r="2.5" fill="#6ab7ea"/>
<circle cx="1484.6" cy="611.5" r="2.5" fill="#6ab7ea"/>
<circle cx="1491.3" cy="609.7" r="2.5" fill="#6ab7ea"/>
<circle cx="1497.9" cy="609.0" r="2.5" fill="#6ab7ea"/>
<circle cx="1504.6" cy="609.0" r="2.5" fill="#6ab7ea"/>
<circle cx="1511.3" cy="609.9" r="2.5" fill="#ea8a3e"/>
<circle cx="1517.9" cy="609.9" r="2.5" fill="#ea8a3e"/>
<circle cx="1524.6" cy="611.5" r="2.5" fill="#ea8a3e"/>
<circle cx="1531.3" cy="611.5" r="2.5" fill="#6ab7ea"/>
<circle cx="1537.9" cy="613.2" r="2.5" fill="#ea8a3e"/>
<circle cx="1544.6" cy="613.7" r="2.5" fill="#ea8a3e"/>
<path d="M4.5 603.6C6.3 603.0 11.3 601.1 15.6 599.7C19.9 598.3 26.2 596.6 31.2 595.0C36.2 593.4 41.9 590.8 46.9 589.5C51.9 588.2 58.0 587.5 62.5 586.9C67.0 586.3 71.0 586.0 75.0 585.9C79.0 585.8 83.2 585.9 87.5 586.1C91.8 586.3 97.6 586.8 101.6 586.9C105.6 587.0 108.8 586.9 112.5 586.9C116.2 586.9 121.3 587.3 125.0 586.9C128.7 586.5 132.2 585.6 135.9 584.1C139.6 582.6 144.6 579.9 148.4 577.8C152.2 575.7 155.6 572.7 159.4 570.8C163.2 568.9 167.9 567.2 171.9 566.1C175.9 565.0 180.9 564.0 184.4 563.8C187.9 563.6 190.8 564.1 193.8 565.0C196.8 565.9 200.1 568.0 203.1 569.2C206.1 570.4 209.5 572.0 212.5 572.8C215.5 573.6 218.9 574.0 221.9 573.9C224.9 573.8 228.3 572.1 231.5 572.1C234.7 572.1 238.8 574.8 241.9 574.2C245.0 573.6 247.9 570.1 251.0 568.2C254.1 566.3 258.3 563.8 261.4 562.5C264.5 561.2 267.8 560.9 270.5 559.9C273.2 558.9 275.9 557.0 278.4 556.5C280.9 556.0 283.7 556.1 286.2 556.5C288.7 556.9 291.7 557.6 294.0 559.1C296.3 560.6 298.2 561.6 300.5 565.6C302.8 569.6 305.8 578.0 308.3 583.8C310.8 589.6 313.6 596.5 316.1 602.1C318.6 607.7 321.4 613.2 323.9 619.0C326.4 624.8 329.2 632.5 331.7 638.5C334.2 644.5 337.0 651.5 339.5 656.7C342.0 661.9 345.2 667.9 347.3 671.0C349.4 674.1 350.8 675.4 352.5 676.2C354.2 677.0 355.6 676.7 357.7 675.7C359.8 674.7 362.6 672.5 365.5 669.7C368.4 666.9 373.1 661.0 376.0 658.0C378.9 655.0 381.3 652.5 383.8 651.0C386.3 649.5 389.1 648.1 391.6 648.4C394.1 648.7 396.9 651.1 399.4 652.8C401.9 654.5 404.3 656.9 407.2 659.3C410.1 661.7 414.7 665.9 417.6 667.6C420.5 669.3 422.9 669.6 425.4 669.7C427.9 669.8 430.7 669.4 433.2 668.4C435.7 667.4 438.1 666.1 441.0 663.2C443.9 660.3 448.1 655.0 451.4 650.2C454.7 645.4 458.5 638.3 461.8 633.3C465.1 628.3 469.8 622.6 472.2 619.0C474.6 615.4 474.8 613.6 476.9 611.1C479.0 608.6 483.1 605.1 485.6 603.3C488.1 601.5 490.3 600.6 492.5 599.8C494.7 599.0 497.3 598.4 499.5 598.1C501.7 597.8 503.9 597.7 506.4 597.8C508.9 597.9 512.3 598.4 515.1 599.0C517.9 599.6 521.0 600.6 523.8 601.6C526.6 602.6 529.9 603.9 532.4 605.0C534.9 606.1 537.4 607.3 539.4 608.5C541.4 609.7 542.7 611.5 544.6 612.5C546.5 613.5 549.0 614.2 551.5 614.6C554.0 615.0 557.4 614.7 560.2 614.9C563.0 615.1 566.1 615.8 568.9 616.0C571.7 616.2 574.7 616.4 577.5 616.3C580.3 616.2 583.4 616.0 586.2 615.6C589.0 615.2 592.1 614.6 594.9 613.7C597.7 612.8 600.8 611.3 603.6 609.9C606.4 608.5 609.4 606.4 612.2 604.7C615.0 603.0 618.1 601.1 620.9 599.5C623.7 597.9 626.8 596.0 629.6 594.6C632.4 593.2 635.4 591.7 638.2 590.6C641.0 589.5 644.1 588.6 646.9 587.7C649.7 586.8 652.8 585.9 655.6 585.1C658.4 584.3 661.5 583.6 664.3 582.5C667.1 581.4 670.4 579.7 672.9 578.5C675.4 577.3 677.9 575.9 679.9 575.2C681.9 574.5 683.4 574.2 685.1 574.3C686.8 574.4 688.4 575.3 690.3 575.6C692.2 575.9 695.0 575.8 697.2 576.1C699.4 576.4 702.0 576.7 704.2 577.3C706.4 577.9 708.9 579.1 711.1 579.9C713.3 580.7 715.8 582.1 718.0 582.5C720.2 582.9 723.3 582.4 725.0 582.5C726.7 582.6 726.7 583.6 728.7 583.0C730.7 582.4 734.5 580.7 737.3 579.0C740.1 577.3 743.2 574.6 746.0 572.1C748.8 569.6 751.9 566.3 754.7 563.4C757.5 560.5 760.9 556.1 763.4 553.9C765.9 551.7 768.1 550.5 770.3 549.5C772.5 548.5 774.7 547.8 777.2 547.8C779.7 547.8 783.1 548.7 785.9 549.5C788.7 550.3 791.8 551.7 794.6 553.0C797.4 554.3 800.8 556.6 803.3 557.9C805.8 559.2 808.0 560.5 810.2 561.3C812.4 562.1 814.9 563.0 817.1 562.9C819.3 562.8 821.9 561.2 824.1 560.8C826.3 560.4 828.2 560.3 831.0 560.5C833.8 560.7 838.1 561.5 841.4 562.0C844.7 562.5 848.7 563.2 851.8 563.8C854.9 564.4 857.7 564.8 860.5 565.7C863.3 566.6 866.4 568.3 869.2 569.5C872.0 570.7 875.3 572.7 877.8 573.5C880.3 574.3 882.3 574.6 884.8 574.7C887.3 574.8 890.3 574.6 893.4 574.3C896.5 574.0 900.0 573.1 903.9 573.0C907.8 572.9 913.8 573.3 917.7 573.8C921.6 574.3 924.8 575.4 928.1 576.4C931.4 577.4 935.2 578.9 938.5 580.2C941.8 581.5 945.7 583.2 949.0 584.7C952.3 586.2 956.1 588.0 959.4 589.4C962.7 590.8 966.4 592.4 969.8 593.4C973.2 594.4 977.0 595.1 980.4 595.9C983.8 596.7 987.5 597.5 990.8 598.1C994.1 598.7 997.9 599.2 1001.2 599.8C1004.5 600.4 1008.8 601.4 1011.6 601.9C1014.4 602.4 1016.1 602.8 1018.6 602.8C1021.1 602.8 1024.4 601.9 1027.2 601.6C1030.0 601.3 1033.1 600.8 1035.9 600.7C1038.7 600.6 1041.8 600.5 1044.6 600.7C1047.4 600.9 1051.2 601.8 1053.3 602.1C1055.4 602.4 1055.9 603.0 1057.6 602.8C1059.3 602.6 1061.1 601.5 1063.7 601.1C1066.3 600.7 1070.8 600.5 1074.1 600.2C1077.4 599.9 1081.2 599.4 1084.5 599.3C1087.8 599.2 1091.6 599.5 1094.9 599.8C1098.2 600.1 1102.8 601.0 1105.3 601.1C1107.8 601.2 1108.3 600.2 1110.5 600.2C1112.7 600.2 1116.4 600.6 1119.2 601.1C1122.0 601.6 1125.0 602.3 1127.8 603.3C1130.6 604.3 1133.7 606.0 1136.5 607.6C1139.3 609.2 1142.4 611.3 1145.2 613.2C1148.0 615.1 1151.4 617.5 1153.9 619.4C1156.4 621.3 1158.9 623.4 1160.8 625.0C1162.7 626.6 1164.3 628.3 1166.0 629.3C1167.7 630.3 1169.5 631.4 1171.2 631.4C1172.9 631.4 1175.0 629.9 1176.4 629.3C1177.8 628.7 1178.2 628.8 1180.0 627.7C1181.8 626.6 1185.0 624.1 1187.4 622.5C1189.8 620.9 1192.3 619.4 1194.9 618.0C1197.5 616.6 1201.0 614.9 1203.8 613.8C1206.6 612.7 1209.9 611.7 1212.7 611.0C1215.5 610.3 1218.7 609.8 1221.6 609.4C1224.5 609.0 1227.7 608.2 1230.6 608.3C1233.5 608.4 1236.7 609.3 1239.5 609.8C1242.3 610.3 1245.6 610.9 1248.4 611.3C1251.2 611.7 1254.5 612.1 1257.3 612.3C1260.1 612.5 1263.3 612.4 1266.2 612.8C1269.1 613.2 1272.3 614.2 1275.2 614.6C1278.1 615.0 1281.5 615.2 1284.1 615.3C1286.7 615.4 1289.6 615.4 1291.5 615.0C1293.4 614.6 1294.3 613.6 1296.0 613.1C1297.7 612.6 1299.5 611.9 1301.9 611.7C1304.3 611.5 1308.1 611.6 1310.9 611.6C1313.7 611.6 1316.4 611.1 1319.1 611.5C1321.8 611.9 1325.0 613.1 1327.8 614.2C1330.6 615.3 1333.4 616.8 1336.4 618.1C1339.4 619.4 1343.5 621.3 1346.8 622.4C1350.1 623.5 1353.6 624.0 1357.2 625.0C1360.8 626.0 1365.8 627.4 1369.4 628.5C1373.0 629.6 1376.5 630.9 1379.8 631.9C1383.1 632.9 1387.4 634.3 1390.2 634.9C1393.0 635.5 1394.6 635.9 1397.1 635.7C1399.6 635.5 1403.0 634.6 1405.8 633.7C1408.6 632.8 1411.4 631.5 1414.5 630.2C1417.6 628.9 1421.6 627.0 1424.9 625.5C1428.2 624.0 1432.0 622.2 1435.3 620.7C1438.6 619.2 1442.4 617.7 1445.7 616.3C1449.0 614.9 1452.8 613.2 1456.1 612.0C1459.4 610.8 1463.2 609.5 1466.5 608.5C1469.8 607.5 1473.6 606.7 1476.9 605.9C1480.2 605.1 1484.2 604.4 1487.3 603.8C1490.4 603.2 1493.2 602.6 1496.0 602.4C1498.8 602.2 1501.6 602.7 1504.7 602.8C1507.8 602.9 1511.8 602.4 1515.1 602.8C1518.4 603.2 1522.2 604.2 1525.5 605.0C1528.8 605.8 1532.8 606.8 1535.9 607.6C1539.0 608.4 1543.2 609.8 1544.6 610.2" fill="none" stroke="#5cb85c" stroke-width="1.150" stroke-linejoin="round"/>
<path d="M4.5 609.4C6.3 609.4 12.1 609.1 15.6 609.1C19.1 609.1 22.8 609.3 26.6 609.5C30.4 609.7 35.1 610.3 39.1 610.3C43.1 610.3 47.9 610.0 51.6 609.4C55.3 608.8 58.8 607.5 62.5 606.7C66.2 605.9 71.0 605.3 75.0 604.4C79.0 603.5 83.2 602.3 87.5 601.2C91.8 600.1 97.3 598.3 101.6 597.3C105.9 596.3 110.4 595.6 114.1 595.0C117.8 594.4 122.0 594.2 125.0 593.8C128.0 593.4 130.3 592.5 132.8 592.3C135.3 592.1 137.8 592.6 140.6 592.7C143.4 592.8 146.0 592.7 150.0 593.1C154.0 593.5 161.3 595.2 165.6 595.3C169.9 595.4 173.1 594.3 176.6 593.8C180.1 593.3 184.0 592.8 187.5 591.9C191.0 591.0 195.2 589.2 198.4 588.0C201.6 586.8 204.8 585.3 207.8 584.4C210.8 583.5 214.7 582.7 217.2 582.5C219.7 582.3 220.9 582.3 223.4 583.3C225.9 584.3 230.0 587.3 232.8 589.0C235.6 590.7 238.1 591.5 240.6 594.2C243.1 596.9 245.9 601.0 248.4 606.0C250.9 611.0 253.7 618.4 256.2 625.5C258.7 632.6 261.5 641.9 264.0 650.2C266.5 658.5 269.3 669.0 271.8 677.5C274.3 686.0 277.2 695.7 279.7 703.6C282.2 711.5 285.2 720.8 287.5 727.0C289.8 733.2 292.3 738.9 294.0 742.6C295.7 746.3 296.4 748.4 297.9 749.9C299.4 751.4 301.0 752.2 303.1 751.7C305.2 751.2 307.6 749.0 310.9 746.5C314.2 744.0 320.2 740.1 323.9 736.1C327.6 732.1 331.0 726.3 334.3 721.8C337.6 717.3 341.8 711.4 344.7 708.2C347.6 705.0 350.4 702.7 352.5 701.5C354.6 700.3 355.6 700.1 357.7 700.4C359.8 700.7 362.6 702.5 365.5 703.6C368.4 704.7 372.7 706.3 376.0 707.5C379.3 708.7 383.9 710.2 386.4 710.8C388.9 711.4 388.7 712.3 391.6 711.4C394.5 710.5 400.4 707.8 404.6 704.9C408.8 702.0 413.9 695.7 417.6 693.1C421.3 690.5 424.7 689.8 428.0 688.7C431.3 687.6 435.5 686.5 438.4 686.1C441.3 685.7 442.9 685.4 446.2 686.1C449.5 686.8 455.2 689.4 459.2 690.5C463.2 691.6 468.0 693.1 470.9 693.1C473.8 693.1 475.2 691.5 477.5 690.5C479.8 689.5 482.0 688.3 485.0 686.6C488.0 684.9 492.8 682.5 496.0 680.0C499.2 677.5 501.9 673.8 504.7 671.0C507.5 668.2 510.6 665.1 513.4 662.3C516.2 659.5 519.2 656.2 522.0 653.6C524.8 651.0 527.9 648.3 530.7 645.8C533.5 643.3 536.9 640.4 539.4 638.0C541.9 635.6 544.4 632.9 546.3 631.1C548.2 629.3 549.8 627.7 551.5 626.7C553.2 625.7 554.5 625.1 556.7 624.6C558.9 624.1 562.6 623.7 565.4 623.3C568.2 622.9 571.3 622.3 574.1 621.9C576.9 621.5 579.9 621.0 582.7 620.7C585.5 620.4 587.5 619.9 591.4 619.8C595.3 619.7 602.8 619.8 607.0 620.1C611.2 620.4 614.3 621.2 617.4 621.5C620.5 621.8 622.8 621.9 626.1 621.9C629.4 621.9 634.9 622.0 638.2 621.5C641.5 621.0 643.8 619.8 646.9 618.9C650.0 618.0 654.0 617.0 657.3 616.0C660.6 615.0 664.6 613.6 667.7 612.8C670.8 612.0 673.6 611.3 676.4 610.8C679.2 610.3 682.0 610.2 685.1 609.4C688.2 608.6 692.4 606.8 695.5 605.6C698.6 604.4 701.4 602.8 704.2 601.6C707.0 600.4 710.0 599.4 712.8 598.1C715.6 596.8 719.0 594.6 721.5 593.4C724.0 592.2 726.2 590.8 728.7 590.3C731.2 589.8 734.5 589.9 737.3 590.0C740.1 590.1 743.2 590.8 746.0 591.2C748.8 591.6 751.9 591.9 754.7 592.4C757.5 592.9 760.8 593.8 763.4 594.3C766.0 594.8 768.7 595.6 771.2 595.5C773.7 595.4 776.4 594.7 779.0 593.8C781.6 592.9 784.8 591.3 787.6 589.8C790.4 588.3 793.5 585.8 796.3 584.2C799.1 582.6 802.5 580.9 805.0 579.9C807.5 578.9 810.0 578.3 811.9 578.2C813.8 578.1 815.4 578.7 817.1 579.5C818.8 580.3 820.3 582.4 822.3 583.4C824.3 584.4 826.2 585.5 829.3 586.0C832.4 586.5 837.2 586.6 841.4 586.8C845.6 587.0 851.4 587.2 855.3 587.2C859.2 587.2 862.6 586.9 865.7 586.5C868.8 586.1 871.9 584.7 874.4 584.7C876.9 584.7 879.1 585.6 881.3 586.5C883.5 587.4 885.7 588.9 888.2 590.3C890.7 591.7 893.8 593.8 896.9 595.5C900.0 597.2 904.0 599.1 907.3 600.7C910.6 602.3 914.4 604.2 917.7 605.6C921.0 607.0 924.8 608.4 928.1 609.4C931.4 610.4 935.4 611.2 938.5 611.6C941.6 612.0 943.9 611.9 947.2 611.6C950.5 611.3 955.8 610.3 959.4 609.9C963.0 609.5 966.4 609.4 969.8 609.4C973.2 609.4 977.0 609.8 980.4 609.7C983.8 609.6 987.5 609.1 990.8 608.9C994.1 608.7 997.9 608.6 1001.2 608.5C1004.5 608.4 1008.3 608.8 1011.6 608.5C1014.9 608.2 1019.2 607.1 1022.0 606.8C1024.8 606.5 1026.2 606.7 1029.0 606.8C1031.8 606.9 1036.3 607.3 1039.4 607.6C1042.5 607.9 1045.3 607.9 1048.1 608.5C1050.9 609.1 1053.9 610.4 1056.7 611.5C1059.5 612.6 1062.6 614.1 1065.4 615.5C1068.2 616.9 1071.3 618.4 1074.1 620.1C1076.9 621.8 1079.9 624.1 1082.7 625.9C1085.5 627.7 1088.6 629.7 1091.4 631.6C1094.2 633.5 1097.6 635.9 1100.1 638.0C1102.6 640.1 1104.8 642.5 1107.0 644.9C1109.2 647.3 1111.8 650.3 1114.0 652.7C1116.2 655.1 1118.7 657.9 1120.9 659.7C1123.1 661.5 1125.6 663.0 1127.8 664.0C1130.0 665.0 1132.8 665.7 1134.8 666.1C1136.8 666.5 1138.1 666.6 1140.0 666.3C1141.9 666.0 1144.7 665.1 1146.9 664.0C1149.1 662.9 1151.7 661.4 1153.9 659.7C1156.1 658.0 1158.6 655.6 1160.8 653.6C1163.0 651.6 1165.9 648.8 1167.7 647.5C1169.5 646.2 1170.1 645.7 1172.1 645.5C1174.1 645.3 1177.3 645.8 1180.0 646.2C1182.7 646.6 1186.1 647.1 1188.9 647.7C1191.7 648.3 1195.2 649.6 1197.8 649.7C1200.4 649.8 1202.7 649.1 1205.3 648.5C1207.9 647.9 1211.4 646.7 1214.2 645.9C1217.0 645.1 1220.5 644.3 1223.1 643.6C1225.7 642.9 1228.0 642.5 1230.6 641.5C1233.2 640.5 1236.7 638.7 1239.5 637.3C1242.3 635.9 1245.6 634.0 1248.4 632.6C1251.2 631.2 1254.7 629.6 1257.3 628.7C1259.9 627.8 1262.4 627.3 1264.8 626.9C1267.2 626.5 1270.3 626.4 1272.2 626.2C1274.1 626.0 1274.8 625.2 1276.7 625.4C1278.6 625.6 1281.5 626.5 1284.1 627.7C1286.7 628.9 1290.2 631.1 1293.0 632.9C1295.8 634.7 1299.0 637.2 1301.9 638.8C1304.8 640.4 1308.1 641.8 1310.9 643.0C1313.7 644.2 1316.4 645.2 1319.1 646.2C1321.8 647.2 1324.5 648.8 1327.8 649.3C1331.1 649.8 1336.3 648.8 1339.9 649.3C1343.5 649.8 1347.0 651.9 1350.3 652.7C1353.6 653.5 1357.4 654.2 1360.7 654.5C1364.0 654.8 1367.8 654.9 1371.1 654.5C1374.4 654.1 1378.2 652.9 1381.5 651.9C1384.8 650.9 1389.1 649.3 1391.9 648.4C1394.7 647.5 1396.4 646.5 1398.9 646.3C1401.4 646.1 1403.9 647.0 1407.5 647.2C1411.1 647.4 1417.2 647.3 1421.4 647.5C1425.6 647.7 1430.0 648.5 1433.6 648.4C1437.2 648.3 1440.4 647.5 1444.0 646.7C1447.6 645.9 1452.5 644.5 1456.1 643.7C1459.7 642.9 1463.2 642.3 1466.5 641.5C1469.8 640.7 1473.6 639.9 1476.9 638.9C1480.2 637.9 1484.0 636.5 1487.3 635.4C1490.6 634.3 1494.4 633.0 1497.7 631.9C1501.0 630.8 1504.8 629.6 1508.1 628.5C1511.4 627.4 1515.2 626.2 1518.5 625.0C1521.8 623.8 1525.9 622.3 1529.0 621.2C1532.1 620.1 1535.1 619.1 1537.6 618.4C1540.1 617.7 1543.5 617.0 1544.6 616.7" fill="none" stroke="#d9776b" stroke-width="1.150" stroke-linejoin="round"/>
</svg>
<div class="abs" style="left:0;top:77px;width:1600px;height:1.6px;background:#8c8c8c"></div>
<div class="abs" style="left:1.8px;top:78.600px;width:1598px;height:1.500px;background:#f6f6f6"></div>
<div class="abs" style="left:0;top:77px;width:1.800px;height:705px;background:#9a9a9a"></div>
<div class="abs" style="left:1.800px;top:78.600px;width:1.300px;height:703px;background:#f2f2f2"></div>
<div class="abs" style="left:3px;top:80px;width:1595px;height:1.200px;background:#4a4a4a"></div>
<div class="abs" style="left:3px;top:80px;width:1.200px;height:683px;background:#4a4a4a"></div>
<div class="abs" style="left:1598px;top:78px;width:2px;height:705px;background:#e6e6e6"></div>
<div class="abs" style="left:3px;top:534.200px;width:1543px;height:2px;background:#5e5e5e"></div>
<div class="abs" style="left:4px;top:536.200px;width:1542px;height:1.400px;background:#a8a8a8"></div>
<div class="abs" style="left:1544.500px;top:80px;width:1.800px;height:684px;background:#1e1e1e"></div>
<div class="abs" style="left:3px;top:762.200px;width:1543px;height:1.200px;background:#2e2e2e"></div>
<svg class="abs" style="left:6px;top:86px" width="9" height="6" viewBox="0 0 9 6"><path d="M.5 .8h7.600l-3.800 4z" fill="#000"/></svg>
<span class="t ch" style="left:19.300px;top:85.200px;font-size:9.400px;letter-spacing:-.04px">EURUSD,M30  1.06439 1.06450 1.06401 1.06401</span>
<span class="t ch" style="left:7.600px;top:541.200px;font-size:9.300px;">BB MACD(12,26,10) -0.000563 -0.000384 -0.000705</span>
<div class="tk" style="top:113.5px"></div>
<span class="t ch ax" style="top:110.6px">1.09285</span>
<div class="tk" style="top:154.0px"></div>
<span class="t ch ax" style="top:151.1px">1.08990</span>
<div class="tk" style="top:194.5px"></div>
<span class="t ch ax" style="top:191.6px">1.08690</span>
<div class="tk" style="top:235.1px"></div>
<span class="t ch ax" style="top:232.2px">1.08395</span>
<div class="tk" style="top:275.5px"></div>
<span class="t ch ax" style="top:272.6px">1.08095</span>
<div class="tk" style="top:316.1px"></div>
<span class="t ch ax" style="top:313.2px">1.07800</span>
<div class="tk" style="top:356.5px"></div>
<span class="t ch ax" style="top:353.6px">1.07500</span>
<div class="tk" style="top:397.1px"></div>
<span class="t ch ax" style="top:394.2px">1.07205</span>
<div class="tk" style="top:437.5px"></div>
<span class="t ch ax" style="top:434.6px">1.06905</span>
<div class="tk" style="top:478.1px"></div>
<span class="t ch ax" style="top:475.2px">1.06610</span>
<div class="tk" style="top:518.7px"></div>
<span class="t ch ax" style="top:515.8px">1.06310</span>
<div class="abs" style="left:1546px;top:501px;width:47.500px;height:11.500px;background:#000"></div>
<span class="t ch" style="left:1551.500px;top:502px;color:#fff">1.06401</span>
<span class="t ch" style="left:1548px;top:540.400px">0.002705</span>
<div class="tk" style="top:600.500px"></div>
<span class="t ch" style="left:1548px;top:597.200px">0.00</span>
<span class="t ch" style="left:1548px;top:752.100px">-0.006939</span>
<div class="tt" style="left:3.8px"></div>
<span class="t ch tl" style="left:3.5px">5 Nov 2024</span>
<div class="tt" style="left:83.8px"></div>
<span class="t ch tl" style="left:83.5px">5 Nov 13:30</span>
<div class="tt" style="left:163.8px"></div>
<span class="t ch tl" style="left:163.5px">5 Nov 19:30</span>
<div class="tt" style="left:243.8px"></div>
<span class="t ch tl" style="left:243.5px">6 Nov 01:30</span>
<div class="tt" style="left:323.8px"></div>
<span class="t ch tl" style="left:323.5px">6 Nov 07:30</span>
<div class="tt" style="left:403.8px"></div>
<span class="t ch tl" style="left:403.5px">6 Nov 13:30</span>
<div class="tt" style="left:483.8px"></div>
<span class="t ch tl" style="left:483.5px">6 Nov 19:30</span>
<div class="tt" style="left:563.8px"></div>
<span class="t ch tl" style="left:563.5px">7 Nov 01:30</span>
<div class="tt" style="left:643.8px"></div>
<span class="t ch tl" style="left:643.5px">7 Nov 07:30</span>
<div class="tt" style="left:723.8px"></div>
<span class="t ch tl" style="left:723.5px">7 Nov 13:30</span>
<div class="tt" style="left:803.8px"></div>
<span class="t ch tl" style="left:803.5px">7 Nov 19:30</span>
<div class="tt" style="left:883.8px"></div>
<span class="t ch tl" style="left:883.5px">8 Nov 01:30</span>
<div class="tt" style="left:963.8px"></div>
<span class="t ch tl" style="left:963.5px">8 Nov 07:30</span>
<div class="tt" style="left:1043.8px"></div>
<span class="t ch tl" style="left:1043.5px">8 Nov 13:30</span>
<div class="tt" style="left:1123.8px"></div>
<span class="t ch tl" style="left:1123.5px">8 Nov 19:30</span>
<div class="tt" style="left:1203.8px"></div>
<span class="t ch tl" style="left:1203.5px">11 Nov 03:30</span>
<div class="tt" style="left:1283.8px"></div>
<span class="t ch tl" style="left:1283.5px">11 Nov 09:30</span>
<div class="tt" style="left:1363.8px"></div>
<span class="t ch tl" style="left:1363.5px">11 Nov 15:30</span>
<div class="tt" style="left:1443.8px"></div>
<span class="t ch tl" style="left:1443.5px">11 Nov 21:30</span>
<div class="tt" style="left:1523.8px"></div>
<span class="t ch tl" style="left:1523.5px">12 Nov 03:30</span>
<div id="dlg" class="abs">
<div class="abs" style="left:0;top:0;width:667px;height:30.8px;background:#fff"></div>
<div class="abs" style="left:666px;top:0;width:1.500px;height:377px;background:#fafafa"></div>
<span class="t" style="left:7.3px;top:9.1px;font-size:13px;letter-spacing:-.33px;color:#000">Custom Indicator - Bollinger Bands MACD MT4</span>
<span class="t" style="left:591.5px;top:9.0px;font-size:12.500px;letter-spacing:0;color:#000">?</span>
<svg class="abs" style="left:637.0px;top:9.5px" width="12" height="12" viewBox="0 0 12 12"><path d="M1 1l10 10M11 1l-10 10" stroke="#111" stroke-width="1.100"/></svg>
<div class="abs" style="left:8.0px;top:57.2px;width:654.0px;height:283.3px;background:#fff;border:1px solid #dedede;box-sizing:border-box"></div>
<div class="tab" style="left:9.0px;top:39.5px;width:39.4px"></div>
<div class="tab" style="left:48.4px;top:39.5px;width:53.4px"></div>
<div class="tab" style="left:101.3px;top:37.7px;width:43.5px;height:21px;background:#fff;border-color:#d9d9d9"></div>
<span class="t" style="left:108.3px;top:40.9px">Inputs</span>
<div class="tab" style="left:144.3px;top:39.5px;width:41.0px"></div>
<div class="tab" style="left:185.3px;top:39.5px;width:43.2px"></div>
<div class="tab" style="left:228.5px;top:39.5px;width:70.5px"></div>
<span class="t" style="left:13.3px;top:42.7px">About</span>
<span class="t" style="left:53.3px;top:42.7px">Common</span>
<span class="t" style="left:148.3px;top:42.7px">Colors</span>
<span class="t" style="left:190.5px;top:42.7px">Levels</span>
<span class="t" style="left:234.0px;top:42.7px">Visualization</span>
<div class="abs" style="left:16.5px;top:64.5px;width:512.7px;height:267.6px;background:#fff;border:1px solid #8b8f96;box-sizing:border-box;overflow:hidden">
<span class="t" style="left:5.5px;top:5.7px">Variable</span>
<span class="t" style="left:251.2px;top:5.7px">Value</span>
<div class="row" style="top:20.7px;height:20.7px">
<svg class="ic" style="left:0.3px;top:1.6px" viewBox="0 0 17 16"><path d="M1.500 1.500h11.500l2.500 2.500v8.500q-3.500 2.500-7 .5t-7 .8z" fill="#f1e873" stroke="#c6b738" stroke-width="1"/><path d="M13 1.500v2.500h2.500" fill="#fbf5b5" stroke="#c4b02c" stroke-width=".8"/><text x="7.300" y="10.800" text-anchor="middle" font-size="8.500" font-weight="bold" font-family="Liberation Sans,sans-serif" fill="#5a5408" letter-spacing="-.3">ab</text></svg>
<span class="t" style="left:23.2px;top:4.6px">Display_Settings</span>
<span class="t" style="left:249.8px;top:4.6px"><span style="font-size:10.2px;letter-spacing:-.15px;position:relative;top:-.6px;font-weight:bold">==========</span> Display Settings <span style="font-size:10.2px;letter-spacing:-.15px;position:relative;top:-.6px;font-weight:bold">==========</span></span>
</div>
<div class="row alt" style="top:41.4px;height:20.7px">
<svg class="ic" style="left:0.3px;top:1.6px" viewBox="0 0 17 16"><path d="M1.500 1.500h11.500l2.500 2.500v8.500q-3.500 2.500-7 .5t-7 .8z" fill="#a8d0f3" stroke="#5a98d6" stroke-width="1"/><path d="M13 1.500v2.500h2.500" fill="#dcecfb" stroke="#5a98d6" stroke-width=".8"/><text x="7.800" y="10.600" text-anchor="middle" font-size="7.200" font-weight="bold" font-family="Liberation Sans,sans-serif" fill="#123f86" letter-spacing="-.5">123</text></svg>
<span class="t" style="left:23.2px;top:4.6px">chart_theme</span>
<span class="t" style="left:249.8px;top:4.6px">Light</span>
</div>
<div class="row" style="top:62.1px;height:20.7px">
<svg class="ic" style="left:0.3px;top:1.6px" viewBox="0 0 17 16"><path d="M1.500 1.500h11.500l2.500 2.500v8.500q-3.500 2.500-7 .5t-7 .8z" fill="#f1e873" stroke="#c6b738" stroke-width="1"/><path d="M13 1.500v2.500h2.500" fill="#fbf5b5" stroke="#c4b02c" stroke-width=".8"/><text x="7.300" y="10.800" text-anchor="middle" font-size="8.500" font-weight="bold" font-family="Liberation Sans,sans-serif" fill="#5a5408" letter-spacing="-.3">ab</text></svg>
<span class="t" style="left:23.2px;top:4.6px">Indicator_Settings</span>
<span class="t" style="left:249.8px;top:4.6px"><span style="font-size:10.2px;letter-spacing:-.15px;position:relative;top:-.6px;font-weight:bold">==========</span> Indicator Settings <span style="font-size:10.2px;letter-spacing:-.15px;position:relative;top:-.6px;font-weight:bold">==========</span></span>
</div>
<div class="row alt" style="top:82.8px;height:20.7px">
<svg class="ic" style="left:0.3px;top:1.6px" viewBox="0 0 17 16"><path d="M1.500 1.500h11.500l2.500 2.500v8.500q-3.500 2.500-7 .5t-7 .8z" fill="#a8d0f3" stroke="#5a98d6" stroke-width="1"/><path d="M13 1.500v2.500h2.500" fill="#dcecfb" stroke="#5a98d6" stroke-width=".8"/><text x="7.800" y="10.600" text-anchor="middle" font-size="7.200" font-weight="bold" font-family="Liberation Sans,sans-serif" fill="#123f86" letter-spacing="-.5">123</text></svg>
<span class="t" style="left:23.2px;top:4.6px">fast_ma_period</span>
<span class="t" style="left:249.8px;top:4.6px">12</span>
</div>
<div class="row" style="top:103.5px;height:20.7px">
<svg class="ic" style="left:0.3px;top:1.6px" viewBox="0 0 17 16"><path d="M1.500 1.500h11.500l2.500 2.500v8.500q-3.500 2.500-7 .5t-7 .8z" fill="#a8d0f3" stroke="#5a98d6" stroke-width="1"/><path d="M13 1.500v2.500h2.500" fill="#dcecfb" stroke="#5a98d6" stroke-width=".8"/><text x="7.800" y="10.600" text-anchor="middle" font-size="7.200" font-weight="bold" font-family="Liberation Sans,sans-serif" fill="#123f86" letter-spacing="-.5">123</text></svg>
<span class="t" style="left:23.2px;top:4.6px">slow_ma_period</span>
<span class="t" style="left:249.8px;top:4.6px">26</span>
</div>
<div class="row alt" style="top:124.2px;height:20.7px">
<svg class="ic" style="left:0.3px;top:1.6px" viewBox="0 0 17 16"><path d="M1.500 1.500h11.500l2.500 2.500v8.500q-3.500 2.500-7 .5t-7 .8z" fill="#a8d0f3" stroke="#5a98d6" stroke-width="1"/><path d="M13 1.500v2.500h2.500" fill="#dcecfb" stroke="#5a98d6" stroke-width=".8"/><text x="7.800" y="10.600" text-anchor="middle" font-size="7.200" font-weight="bold" font-family="Liberation Sans,sans-serif" fill="#123f86" letter-spacing="-.5">123</text></svg>
<span class="t" style="left:23.2px;top:4.6px">bb_period</span>
<span class="t" style="left:249.8px;top:4.6px">10</span>
</div>
<div class="row" style="top:144.9px;height:20.7px">
<svg class="ic" style="left:0.3px;top:1.6px" viewBox="0 0 17 16"><path d="M1.500 1.500h11.500l2.500 2.500v8.500q-3.500 2.500-7 .5t-7 .8z" fill="#b9e3f5" stroke="#62b3d8" stroke-width="1"/><path d="M13 1.500v2.500h2.500" fill="#e3f4fb" stroke="#62b3d8" stroke-width=".8"/><text x="7.800" y="10.600" text-anchor="middle" font-size="7.600" font-weight="bold" font-family="Liberation Sans,sans-serif" fill="#1d78a8" letter-spacing="-.6">½</text></svg>
<span class="t" style="left:23.2px;top:4.6px">bb_std</span>
<span class="t" style="left:249.8px;top:4.6px">2.5</span>
</div>
<div class="row alt" style="top:165.6px;height:20.7px">
<svg class="ic" style="left:0.3px;top:1.6px" viewBox="0 0 17 16"><path d="M1.500 1.500h11.500l2.500 2.500v8.500q-3.500 2.500-7 .5t-7 .8z" fill="#7fe07f" stroke="#35a535" stroke-width="1"/><path d="M13 1.500v2.500h2.500" fill="#d2f6d2" stroke="#35a535" stroke-width=".8"/><path d="M3.500 10.500l4-4.500" stroke="#0b4f0b" stroke-width="1.800" fill="none"/><path d="M8 7.500q1.500 -1.500 2.500 0t2.500 0" stroke="#0b4f0b" stroke-width="1.400" fill="none"/></svg>
<span class="t" style="left:23.2px;top:4.6px">alert</span>
<span class="t" style="left:249.8px;top:4.6px">false</span>
</div>
<div class="row" style="top:186.3px;height:20.7px">
<svg class="ic" style="left:0.3px;top:1.6px" viewBox="0 0 17 16"><path d="M1.500 1.500h11.500l2.500 2.500v8.500q-3.500 2.500-7 .5t-7 .8z" fill="#7fe07f" stroke="#35a535" stroke-width="1"/><path d="M13 1.500v2.500h2.500" fill="#d2f6d2" stroke="#35a535" stroke-width=".8"/><path d="M3.500 10.500l4-4.500" stroke="#0b4f0b" stroke-width="1.800" fill="none"/><path d="M8 7.500q1.500 -1.500 2.500 0t2.500 0" stroke="#0b4f0b" stroke-width="1.400" fill="none"/></svg>
<span class="t" style="left:23.2px;top:4.6px">alert_sound</span>
<span class="t" style="left:249.8px;top:4.6px">false</span>
</div>
<div class="row alt" style="top:207.0px;height:20.7px">
<svg class="ic" style="left:0.3px;top:1.6px" viewBox="0 0 17 16"><path d="M1.500 1.500h11.500l2.500 2.500v8.500q-3.500 2.500-7 .5t-7 .8z" fill="#7fe07f" stroke="#35a535" stroke-width="1"/><path d="M13 1.500v2.500h2.500" fill="#d2f6d2" stroke="#35a535" stroke-width=".8"/><path d="M3.500 10.500l4-4.500" stroke="#0b4f0b" stroke-width="1.800" fill="none"/><path d="M8 7.500q1.500 -1.500 2.500 0t2.500 0" stroke="#0b4f0b" stroke-width="1.400" fill="none"/></svg>
<span class="t" style="left:23.2px;top:4.6px">alert_email</span>
<span class="t" style="left:249.8px;top:4.6px">false</span>
</div>
<div class="row" style="top:227.7px;height:20.7px">
<svg class="ic" style="left:0.3px;top:1.6px" viewBox="0 0 17 16"><path d="M1.500 1.500h11.500l2.500 2.500v8.500q-3.500 2.500-7 .5t-7 .8z" fill="#f1e873" stroke="#c6b738" stroke-width="1"/><path d="M13 1.500v2.500h2.500" fill="#fbf5b5" stroke="#c4b02c" stroke-width=".8"/><text x="7.300" y="10.800" text-anchor="middle" font-size="8.500" font-weight="bold" font-family="Liberation Sans,sans-serif" fill="#5a5408" letter-spacing="-.3">ab</text></svg>
<span class="t" style="left:23.2px;top:4.6px">sound_file</span>
<span class="t" style="left:249.8px;top:4.6px">alert.wav</span>
</div>
<div class="row alt" style="top:248.4px;height:20.7px">
<svg class="ic" style="left:0.3px;top:1.6px" viewBox="0 0 17 16"><path d="M1.500 1.500h11.500l2.500 2.500v8.500q-3.500 2.500-7 .5t-7 .8z" fill="#a8d0f3" stroke="#5a98d6" stroke-width="1"/><path d="M13 1.500v2.500h2.500" fill="#dcecfb" stroke="#5a98d6" stroke-width=".8"/><text x="7.800" y="10.600" text-anchor="middle" font-size="7.200" font-weight="bold" font-family="Liberation Sans,sans-serif" fill="#123f86" letter-spacing="-.5">123</text></svg>
<span class="t" style="left:23.2px;top:4.6px">lookback</span>
<span class="t" style="left:249.8px;top:4.6px">400</span>
</div>
<div class="vl" style="left:245.7px;top:0;height:270px;background:#e2e2e2"></div>
<div class="abs" style="left:492.1px;top:0;width:18.6px;height:270px;background:#f0f0f0"></div>
<div class="abs" style="left:493.1px;top:18.9px;width:16.1px;height:209.6px;background:#cdcdcd"></div>
<svg class="abs" style="left:496.1px;top:5.5px" width="10" height="7" viewBox="0 0 10 7"><path d="M1 5.500l4-4 4 4" fill="none" stroke="#333" stroke-width="1.400"/></svg>
<svg class="abs" style="left:496.1px;top:253.5px" width="10" height="7" viewBox="0 0 10 7"><path d="M1 1.500l4 4 4-4" fill="none" stroke="#333" stroke-width="1.400"/></svg>
</div>
<div class="btn" style="left:538.4px;top:276.0px;width:114.4px;height:20.7px;line-height:21.1px;"><span>Load</span></div>
<div class="btn" style="left:538.4px;top:309.7px;width:114.4px;height:20.4px;line-height:20.8px;"><span>Save</span></div>
<div class="btn" style="left:397.0px;top:347.7px;width:82.0px;height:20.8px;line-height:21.2px;border:2px solid #0078d7;line-height:19px;"><span>OK</span></div>
<div class="btn" style="left:487.8px;top:347.7px;width:81.0px;height:20.8px;line-height:21.2px;"><span>Cancel</span></div>
<div class="btn" style="left:577.8px;top:347.7px;width:80.7px;height:20.8px;line-height:21.2px;"><span>Reset</span></div>
<svg class="abs" style="left:660.0px;top:370.5px" width="6" height="6" viewBox="0 0 6 6"><path d="M.5 .5h1.500v1.500h-1.500zM4 .5h1.500v1.500h-1.500zM.5 4h1.500v1.500h-1.500zM4 4h1.500v1.500h-1.500z" fill="#bdbdbd"/></svg>
</div>
<div class="abs" style="left:0;top:781.500px;width:1600px;height:26px;background:#f0f0f0"></div>
<div class="abs" style="left:0;top:781.500px;width:1600px;height:2.200px;background:#f7f7f7"></div>
<div class="hl" style="left:0;top:783.700px;width:1600px;height:1.100px;background:#3c3c3c"></div>
<div class="abs" style="left:6.200px;top:783.500px;width:96.500px;height:20px;background:#f9f9f9;border:1.200px solid #333;border-top:none;box-sizing:border-box;border-radius:0 0 2px 2px"></div>
<span class="t ui" style="left:18px;top:788.600px;font-size:12.300px;letter-spacing:-.55px;color:#111">EURUSD,M30</span>
<span class="t ui" style="left:115px;top:788.600px;font-size:12.300px;letter-spacing:-.5px;color:#8a8a8a">USDCHF,Weekly</span>
<span class="t ui" style="left:226.500px;top:788.600px;font-size:12.300px;letter-spacing:-.62px;color:#8a8a8a">CADJPY,H1</span>
<span class="t ui" style="left:310px;top:788.600px;font-size:12.300px;letter-spacing:-1px;color:#8a8a8a">GBPJPY,H4</span>
<span class="t ui" style="left:391px;top:788.600px;font-size:12.300px;letter-spacing:-.87px;color:#8a8a8a">BTCUSD,H4</span>
<div class="vl" style="left:216px;top:788px;height:14px;background:#8f8f8f"></div>
<div class="vl" style="left:299.500px;top:788px;height:14px;background:#8f8f8f"></div>
<div class="vl" style="left:380px;top:788px;height:14px;background:#8f8f8f"></div>
<div class="vl" style="left:465.500px;top:788px;height:14px;background:#8f8f8f"></div>
<svg class="abs" style="left:1560px;top:787px" width="36" height="12" viewBox="0 0 36 12"><path d="M9.500 2.500v7l-4-3.500z" fill="#9a9a9a"/><path d="M26.500 2.500v7l4-3.500z" fill="#6f6f6f"/></svg>
<div class="hl" style="left:0;top:805px;width:1600px;background:#e3e3e3"></div>

</body>
</html>
